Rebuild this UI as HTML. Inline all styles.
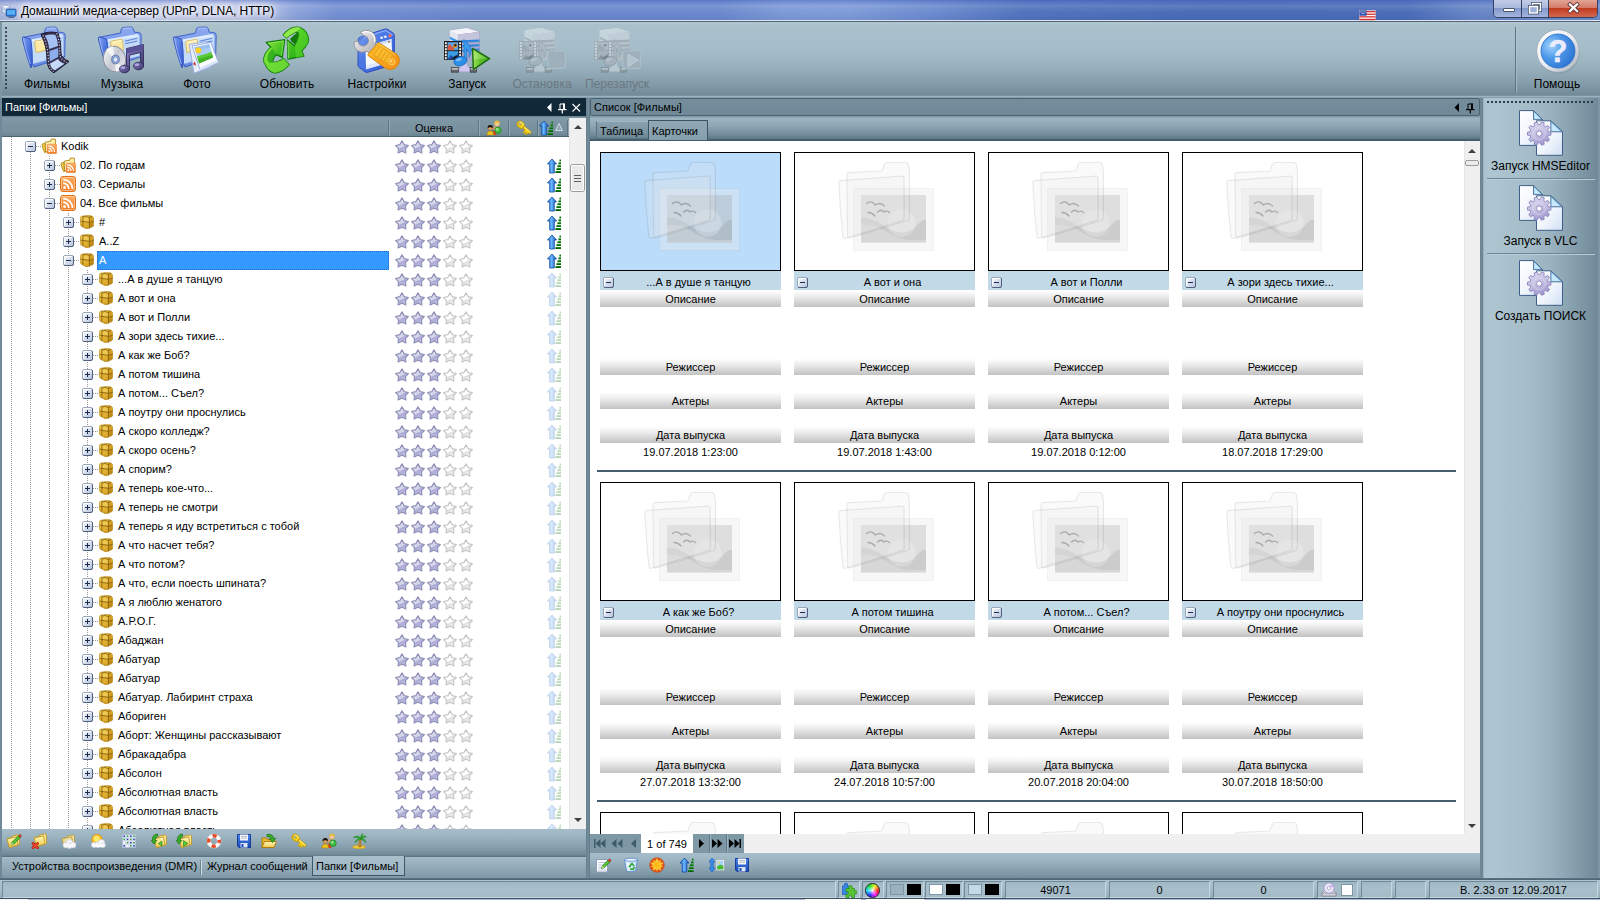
<!DOCTYPE html><html lang="ru"><head><meta charset="utf-8"><title>Домашний медиа-сервер (UPnP, DLNA, HTTP)</title><style>
*{box-sizing:border-box;margin:0;padding:0}
html,body{width:1600px;height:900px;overflow:hidden}
body{position:relative;background:#7b95a3;font:11px "Liberation Sans",sans-serif;color:#000}
div,svg.i{position:absolute}
.t{white-space:nowrap;line-height:14px;height:14px}
.c{text-align:center}
.l{font-size:12px;line-height:15px;height:15px}
.hd{background:linear-gradient(#fdfdfd,#ececec 35%,#d2d2d2 75%,#c2c2c2)}
.ti{background:#c2d9e8}
.ib{border:1px solid #000;background:#fff;overflow:hidden}
</style></head><body>
<svg width="0" height="0" style="position:absolute"><defs>
<linearGradient id="gFold" x1="0" y1="0" x2="1" y2="1"><stop offset="0" stop-color="#86a6f0"/><stop offset=".5" stop-color="#4f76e0"/><stop offset="1" stop-color="#3a5ccc"/></linearGradient>
<linearGradient id="gFoldB" x1="0" y1="0" x2="0" y2="1"><stop offset="0" stop-color="#8eaaf0"/><stop offset="1" stop-color="#6488e0"/></linearGradient>
<linearGradient id="gGreen" x1="0" y1="0" x2="1" y2="1"><stop offset="0" stop-color="#9be84a"/><stop offset=".5" stop-color="#3fc01e"/><stop offset="1" stop-color="#1e9a12"/></linearGradient>
<linearGradient id="gStar" gradientUnits="userSpaceOnUse" x1="4" y1="2" x2="10" y2="14"><stop offset="0" stop-color="#e4e4f2"/><stop offset=".5" stop-color="#d2d2e8"/><stop offset=".56" stop-color="#aaaad6"/><stop offset="1" stop-color="#c4c4e4"/></linearGradient>
<linearGradient id="gStarE" gradientUnits="userSpaceOnUse" x1="4" y1="2" x2="10" y2="14"><stop offset="0" stop-color="#ffffff"/><stop offset=".52" stop-color="#ffffff"/><stop offset=".58" stop-color="#dedede"/><stop offset="1" stop-color="#fbfbfb"/></linearGradient>
<linearGradient id="gBox" x1="0" y1="0" x2="1" y2="1"><stop offset="0" stop-color="#fbfcfe"/><stop offset="1" stop-color="#b4c2dc"/></linearGradient>
<linearGradient id="gArrow" x1="0" y1="0" x2="1" y2="0"><stop offset="0" stop-color="#1f78d8"/><stop offset=".45" stop-color="#6cb6ff"/><stop offset="1" stop-color="#0a4fb0"/></linearGradient>
<linearGradient id="gRss" x1="0" y1="0" x2="0" y2="1"><stop offset="0" stop-color="#fbb067"/><stop offset="1" stop-color="#f07820"/></linearGradient>
<linearGradient id="gGold" x1="0" y1="0" x2="1" y2="1"><stop offset="0" stop-color="#f6d860"/><stop offset=".5" stop-color="#dca526"/><stop offset="1" stop-color="#a9760f"/></linearGradient>
<linearGradient id="gYF" x1="0" y1="0" x2="0" y2="1"><stop offset="0" stop-color="#fff6b8"/><stop offset="1" stop-color="#f0cc50"/></linearGradient>
<radialGradient id="gHelp" cx=".3" cy=".35" r=".8"><stop offset="0" stop-color="#a4d4ff"/><stop offset=".45" stop-color="#4c98e8"/><stop offset="1" stop-color="#2a70d0"/></radialGradient>
<linearGradient id="gHelpR" x1="0" y1="0" x2="1" y2="1"><stop offset="0" stop-color="#ffffff"/><stop offset=".5" stop-color="#eceef2"/><stop offset="1" stop-color="#a4acb8"/></linearGradient>
<linearGradient id="gDoc" x1="0" y1="0" x2="1" y2="1"><stop offset="0" stop-color="#ffffff"/><stop offset=".55" stop-color="#f0f5fc"/><stop offset="1" stop-color="#cfdff4"/></linearGradient>
<linearGradient id="gGear" x1="0" y1="0" x2=".4" y2="1"><stop offset="0" stop-color="#dcd8f0"/><stop offset=".6" stop-color="#c4c0e2"/><stop offset="1" stop-color="#a49cd0"/></linearGradient>
<linearGradient id="gSrv" x1="0" y1="0" x2="1" y2="0"><stop offset="0" stop-color="#e8ecf4"/><stop offset=".5" stop-color="#c0c4d8"/><stop offset="1" stop-color="#8c8cb4"/></linearGradient>
<linearGradient id="gCd" x1="0" y1="0" x2="1" y2="1"><stop offset="0" stop-color="#ffffff"/><stop offset=".5" stop-color="#c4c8d0"/><stop offset="1" stop-color="#f0f0f4"/></linearGradient>
<linearGradient id="gNote" x1="0" y1="0" x2="1" y2="1"><stop offset="0" stop-color="#8c84c8"/><stop offset="1" stop-color="#3c3468"/></linearGradient>
<linearGradient id="gOr" x1="0" y1="0" x2="1" y2="1"><stop offset="0" stop-color="#fcc428"/><stop offset=".5" stop-color="#f8a420"/><stop offset="1" stop-color="#f09018"/></linearGradient>
<linearGradient id="gWin" x1="0" y1="0" x2="1" y2="1"><stop offset="0" stop-color="#7ea4f4"/><stop offset=".4" stop-color="#4c78e4"/><stop offset="1" stop-color="#345cd4"/></linearGradient>
<linearGradient id="gSilver" x1="0" y1="0" x2="1" y2="1"><stop offset="0" stop-color="#fafafa"/><stop offset="1" stop-color="#a4a4ac"/></linearGradient>
<linearGradient id="gPlay" x1="0" y1="0" x2="1" y2="0"><stop offset="0" stop-color="#a4e264"/><stop offset=".45" stop-color="#5cc028"/><stop offset="1" stop-color="#3ca418"/></linearGradient>
<linearGradient id="gFlop" x1="0" y1="0" x2="0" y2="1"><stop offset="0" stop-color="#4c84e8"/><stop offset="1" stop-color="#1848b8"/></linearGradient>
<symbol id="plus" viewBox="0 0 11 11"><rect x=".5" y=".5" width="10" height="10" rx="1.500" fill="url(#gBox)" stroke="#9aa6bc"/><path d="M1 10 Q1.500 10.500 2 10.500 L9 10.500 Q10.500 10.500 10.500 9 L10.500 2 Q10.500 1.500 10 1" fill="none" stroke="#50607e" stroke-width="1"/><path d="M1.500 9 L1.500 1.500 L9 1.500" fill="none" stroke="#fff" stroke-opacity=".9"/><path d="M3 5.500 h5 M5.500 3 v5" stroke="#1c2c4c" stroke-width="1"/></symbol><symbol id="minus" viewBox="0 0 11 11"><rect x=".5" y=".5" width="10" height="10" rx="1.500" fill="url(#gBox)" stroke="#9aa6bc"/><path d="M1 10 Q1.500 10.500 2 10.500 L9 10.500 Q10.500 10.500 10.500 9 L10.500 2 Q10.500 1.500 10 1" fill="none" stroke="#50607e" stroke-width="1"/><path d="M1.500 9 L1.500 1.500 L9 1.500" fill="none" stroke="#fff" stroke-opacity=".9"/><path d="M3 5.500 h5" stroke="#1c2c4c" stroke-width="1"/></symbol><symbol id="stars" viewBox="0 0 82 17"><path transform="translate(1,0)" d="M7.00 1.90 L9.17 5.61 L13.37 6.53 L10.52 9.74 L10.94 14.02 L7.00 12.30 L3.06 14.02 L3.48 9.74 L0.63 6.53 L4.83 5.61Z" fill="url(#gStar)" stroke="#8e8eb6" stroke-width="1.1" stroke-linejoin="round"/><path transform="translate(17,0)" d="M7.00 1.90 L9.17 5.61 L13.37 6.53 L10.52 9.74 L10.94 14.02 L7.00 12.30 L3.06 14.02 L3.48 9.74 L0.63 6.53 L4.83 5.61Z" fill="url(#gStar)" stroke="#8e8eb6" stroke-width="1.1" stroke-linejoin="round"/><path transform="translate(33,0)" d="M7.00 1.90 L9.17 5.61 L13.37 6.53 L10.52 9.74 L10.94 14.02 L7.00 12.30 L3.06 14.02 L3.48 9.74 L0.63 6.53 L4.83 5.61Z" fill="url(#gStar)" stroke="#8e8eb6" stroke-width="1.1" stroke-linejoin="round"/><path transform="translate(49,0)" d="M7.00 1.90 L9.17 5.61 L13.37 6.53 L10.52 9.74 L10.94 14.02 L7.00 12.30 L3.06 14.02 L3.48 9.74 L0.63 6.53 L4.83 5.61Z" fill="url(#gStarE)" stroke="#c4c4c8" stroke-width="1.1" stroke-linejoin="round"/><path transform="translate(65,0)" d="M7.00 1.90 L9.17 5.61 L13.37 6.53 L10.52 9.74 L10.94 14.02 L7.00 12.30 L3.06 14.02 L3.48 9.74 L0.63 6.53 L4.83 5.61Z" fill="url(#gStarE)" stroke="#c4c4c8" stroke-width="1.1" stroke-linejoin="round"/></symbol><symbol id="arrowbars" viewBox="0 0 15 16"><path d="M5 1 L9.500 6 L7.300 6 L7.300 15 L2.700 15 L2.700 6 L.5 6 Z" fill="url(#gArrow)" stroke="#0c4aa0" stroke-width=".8" stroke-linejoin="round"/><g fill="#128a12"><rect x="12.500" y="1.500" width="1.500" height="1.800"/><rect x="11.500" y="4.300" width="2.500" height="1.900"/><rect x="10.500" y="7.200" width="3.500" height="1.900"/><rect x="9.500" y="10.100" width="4.500" height="1.900"/><rect x="8.500" y="13" width="5.500" height="2"/></g><g fill="#0a4a0a"><rect x="12.500" y="2.700" width="1.500" height=".6"/><rect x="11.500" y="5.600" width="2.500" height=".6"/><rect x="10.500" y="8.500" width="3.500" height=".6"/><rect x="9.500" y="11.400" width="4.500" height=".6"/><rect x="8.500" y="14.300" width="5.500" height=".7"/></g></symbol><symbol id="rss" viewBox="0 0 16 16"><rect x=".5" y=".5" width="15" height="15" rx="2.500" fill="url(#gRss)" stroke="#e0701c"/><rect x="1.500" y="1.500" width="13" height="13" rx="1.800" fill="none" stroke="#ffd0a0" stroke-opacity=".7"/><circle cx="4.600" cy="11.500" r="1.500" fill="#fff"/><path d="M3.200 7.300 A5.600 5.600 0 0 1 8.800 12.900" fill="none" stroke="#fff" stroke-width="1.900"/><path d="M3.200 3.600 A9.300 9.300 0 0 1 12.500 12.900" fill="none" stroke="#fff" stroke-width="1.900"/></symbol><symbol id="rssfolder" viewBox="0 0 16 16"><path d="M4.200 14 L4.200 4.200 L10 3.100 L10.200 1.100 L14.300 1.100 L14.300 12 Z" fill="#fff8d4" stroke="#b48a18" stroke-width="1" stroke-linejoin="round"/><path d="M5 5 L10.500 4 L10.800 2 L13.500 2 L13.500 6 L5 7Z" fill="#fff29c" fill-opacity=".8"/><path d="M1 6.200 L3.800 5.300 L4.600 14.300 L3.500 14.500 Q1.500 10 1 6.200Z" fill="#f2d050" stroke="#b48a18" stroke-width=".9" stroke-linejoin="round"/><rect x="6" y="6" width="9.700" height="9.700" rx="1.200" fill="url(#gRss)" stroke="#e88c44" stroke-width=".5"/><circle cx="8.300" cy="13.300" r="1" fill="#fff"/><path d="M7.400 10.400 A3.700 3.700 0 0 1 11.100 14.100" fill="none" stroke="#fff" stroke-width="1.200"/><path d="M7.400 7.900 A6.200 6.200 0 0 1 13.600 14.100" fill="none" stroke="#fff" stroke-width="1.200"/></symbol><symbol id="cube" viewBox="0 0 14 14"><path d="M.5 2.600 Q.5 1.300 2 1.100 L8.500 .4 Q10 .3 11 .8 L13 1.900 Q13.600 2.300 13.600 3.400 L13.600 10.200 Q13.600 11.300 12.600 11.800 L8 13.600 Q6.800 14 5.700 13.500 L1.500 11.300 Q.5 10.800 .5 9.700 Z" fill="url(#gGold)" stroke="#b88a14" stroke-width=".6"/><path d="M3 2.700 L9.300 2.200 L9.300 13 L3 11.500Z" fill="#e8bc3c" fill-opacity=".55"/><path d="M3.300 3 L9 2.600 L9 6.800 L3.300 6.300Z" fill="#f4d468" fill-opacity=".6"/><path d="M2.900 1.500 L2.900 11.800 M9.400 2 L9.400 13.400" stroke="#7a5606" stroke-width=".9" stroke-opacity=".85" fill="none"/><path d="M.5 6 Q1.800 6.600 2.900 6.500 L9.400 7.300 Q11.500 7.200 13.600 6.200" stroke="#7a5606" stroke-width=".9" stroke-opacity=".85" fill="none"/><path d="M2.900 1.500 Q5 2.400 6 1 M6 1 Q7.500 2.500 9.400 2.100 Q11 2.200 12 1.300" stroke="#6a4a04" stroke-width=".8" stroke-opacity=".8" fill="none"/></symbol><symbol id="key" viewBox="0 0 16 16"><g transform="rotate(40 5 5)"><ellipse cx="4.600" cy="5" rx="4" ry="3.300" fill="#f6d21c" stroke="#c09808" stroke-width=".9"/><ellipse cx="3.600" cy="5" rx="1.500" ry="1.200" fill="#a8becb" stroke="#c09808" stroke-width=".6"/><path d="M8.400 3.700 L17 3.700 L17.800 5 L17 6.300 L15.500 6.300 L15.500 9 L14 9 L14 7.500 L13 7.500 L13 9.500 L11.300 9.500 L11.300 6.300 L8.400 6.300Z" fill="#f6d21c" stroke="#c09808" stroke-width=".8" stroke-linejoin="round"/><path d="M8.500 4.500 L16.800 4.500" stroke="#fff4a0" stroke-width=".8"/><path d="M2 3.600 Q4.500 1.800 7 3.200" stroke="#fff4a0" stroke-width=".8" fill="none"/></g></symbol><symbol id="users" viewBox="0 0 16 16"><circle cx="11" cy="3.800" r="2.700" fill="#f2cc98" stroke="#b8884c" stroke-width=".5"/><path d="M8.200 3.600 Q8.500 .6 11 .6 Q13.600 .6 13.800 3.600 Q11 2 8.200 3.600Z" fill="#e6bc38"/><circle cx="8.600" cy="8.200" r="1.700" fill="#e0a070"/><path d="M7 15 L7.300 10.500 Q8.500 9.600 10 10.500 L10.300 15Z" fill="#d43c1c"/><circle cx="12" cy="10.300" r="3.300" fill="#3cb83c" stroke="#1c7c1c" stroke-width=".6"/><circle cx="11.200" cy="9.300" r="1.500" fill="#a8eca8" fill-opacity=".75"/><circle cx="4.300" cy="8" r="2.500" fill="#d8a468" stroke="#5c3c14" stroke-width=".4"/><path d="M1.700 8 Q1.500 5 4.300 5 Q7 5 6.900 8 Q4.300 6.500 1.700 8Z" fill="#181008"/><path d="M.8 15 Q.8 11 4.300 11 Q7.600 11 7.600 15 Z" fill="#f2c41c" stroke="#a8800c" stroke-width=".6"/></symbol><symbol id="fedit" viewBox="0 0 16 16"><path d="M1.500 5.500 L6 4.500 L6.500 3 L12 1.800 L13.500 3 L13.500 11.500 L3.500 14.500 Z" fill="#f6e494" stroke="#c09828" stroke-width=".9" stroke-linejoin="round"/><path d="M1 6 L10.500 3.800 L12 11.800 L3.500 14.600 Z" fill="url(#gYF)" stroke="#c09828" stroke-width=".9" stroke-linejoin="round"/><path d="M5 12 L5.800 9.500 L12.500 2.800 L14.300 4.600 L7.600 11.300 Z" fill="#58c838" stroke="#1c7c14" stroke-width=".8" stroke-linejoin="round"/><path d="M12.500 2.800 L13.500 1.800 Q14.300 1.200 15 2 Q15.600 2.800 15 3.500 L14.300 4.600Z" fill="#e84838" stroke="#981808" stroke-width=".6"/><path d="M5 12 L5.800 9.500 L7.600 11.300Z" fill="#f8e0a8"/></symbol><symbol id="fdel" viewBox="0 0 16 16"><g transform="translate(2,-1)"><path d="M1.500 5.500 L6 4.500 L6.500 3 L12 1.800 L13.500 3 L13.500 11.500 L3.500 14.500 Z" fill="#f6e494" stroke="#c09828" stroke-width=".9" stroke-linejoin="round"/><path d="M1 6 L10.500 3.800 L12 11.800 L3.500 14.600 Z" fill="url(#gYF)" stroke="#c09828" stroke-width=".9" stroke-linejoin="round"/></g><path d="M2 10.500 L6.500 14.800 M6.500 10.500 L2 14.800" stroke="#a81808" stroke-width="2.800" stroke-linecap="round"/><path d="M2 10.500 L6.500 14.800 M6.500 10.500 L2 14.800" stroke="#f04830" stroke-width="1.600" stroke-linecap="round"/></symbol><symbol id="fcloud" viewBox="0 0 16 16"><g opacity=".85"><path d="M1.500 5.500 L6 4.500 L6.500 3 L12 1.800 L13.500 3 L13.500 11.500 L3.500 14.500 Z" fill="#f6e494" stroke="#c09828" stroke-width=".9" stroke-linejoin="round"/><path d="M1 6 L10.500 3.800 L12 11.800 L3.500 14.600 Z" fill="url(#gYF)" stroke="#c09828" stroke-width=".9" stroke-linejoin="round"/></g><g fill="#f8f8fc" stroke="#c4c8d4" stroke-width=".6"><circle cx="5" cy="12" r="3"/><circle cx="8.500" cy="10" r="3.400"/><circle cx="12" cy="12" r="3"/><circle cx="8.500" cy="13" r="2.600"/></g><rect x="4" y="11" width="9" height="3" fill="#f8f8fc"/></symbol><symbol id="sun" viewBox="0 0 16 16"><circle cx="7" cy="6.500" r="5" fill="#ffc818" stroke="#f09010" stroke-width="1"/><circle cx="6.500" cy="5.500" r="3" fill="#ffe870"/><g fill="#fafafe" stroke="#c8ccd8" stroke-width=".6"><circle cx="4" cy="11.800" r="2.600"/><circle cx="8" cy="11.500" r="3"/><circle cx="11.500" cy="9.800" r="3.200"/><circle cx="13" cy="12.200" r="2.400"/></g><rect x="3.500" y="11" width="10" height="3.200" fill="#fafafe"/></symbol><symbol id="grid" viewBox="0 0 16 16"><rect x="1.500" y="1.500" width="13" height="13" fill="#f4f6fc" stroke="#b0b8d8" stroke-width=".8"/><path d="M4.750 1.500 v13 M8 1.500 v13 M11.250 1.500 v13 M1.500 4.750 h13 M1.500 8 h13 M1.500 11.250 h13" stroke="#c4c8e4" stroke-width=".7"/><g fill="#2040b0"><rect x="2.400" y="2.400" width="1.600" height="1.600"/><rect x="9" y="2.400" width="1.600" height="1.600"/><rect x="5.700" y="5.600" width="1.600" height="1.600"/><rect x="12.200" y="5.600" width="1.600" height="1.600"/><rect x="9" y="8.900" width="1.600" height="1.600"/><rect x="2.400" y="12.100" width="1.600" height="1.600"/><rect x="12.200" y="12.100" width="1.600" height="1.600"/></g><g fill="#30a840"><rect x="5.700" y="2.400" width="1.600" height="1.600"/><rect x="12.200" y="2.400" width="1.600" height="1.600"/><rect x="2.400" y="5.600" width="1.600" height="1.600"/><rect x="9" y="5.600" width="1.600" height="1.600"/><rect x="5.700" y="8.900" width="1.600" height="1.600"/><rect x="12.200" y="8.900" width="1.600" height="1.600"/><rect x="9" y="12.100" width="1.600" height="1.600"/></g></symbol><symbol id="fback" viewBox="0 0 16 16"><g transform="translate(2,0)"><path d="M1.500 5.500 L6 4.500 L6.500 3 L12 1.800 L13.500 3 L13.500 11.500 L3.500 14.500 Z" fill="#f6e494" stroke="#c09828" stroke-width=".9" stroke-linejoin="round"/><path d="M1 6 L10.500 3.800 L12 11.800 L3.500 14.600 Z" fill="url(#gYF)" stroke="#c09828" stroke-width=".9" stroke-linejoin="round"/></g><path d="M6.500 1 Q1 1.500 1.500 7.500 L.3 7.500 L3 11 L5.800 7.500 L4.300 7.500 Q4 4 6.500 3.500Z" fill="#38b028" stroke="#146c0c" stroke-width=".7" stroke-linejoin="round"/><path d="M7.500 8 L7.500 13 L11 10.500Z" fill="#58c838" stroke="#1c7c14" stroke-width=".6" transform="rotate(180 9.200 10.500)"/></symbol><symbol id="ffwd" viewBox="0 0 16 16"><g transform="translate(2,0)"><path d="M1.500 5.500 L6 4.500 L6.500 3 L12 1.800 L13.500 3 L13.500 11.500 L3.500 14.500 Z" fill="#f6e494" stroke="#c09828" stroke-width=".9" stroke-linejoin="round"/><path d="M1 6 L10.500 3.800 L12 11.800 L3.500 14.600 Z" fill="url(#gYF)" stroke="#c09828" stroke-width=".9" stroke-linejoin="round"/></g><path d="M6.500 1 Q1 1.500 1.500 7.500 L.3 7.500 L3 11 L5.800 7.500 L4.300 7.500 Q4 4 6.500 3.500Z" fill="#38b028" stroke="#146c0c" stroke-width=".7" stroke-linejoin="round"/><path d="M7.500 7.500 L7.500 13.500 L12 10.500Z" fill="#58c838" stroke="#1c7c14" stroke-width=".6"/></symbol><symbol id="lifebuoy" viewBox="0 0 16 16"><circle cx="8" cy="8" r="5.200" fill="none" stroke="#c4c4c4" stroke-width="4.600"/><circle cx="8" cy="8" r="5.200" fill="none" stroke="#fafafa" stroke-width="3.600"/><circle cx="8" cy="8" r="5.200" fill="none" stroke="#e84c2c" stroke-width="3.600" stroke-dasharray="4.080 4.080" stroke-dashoffset="2"/></symbol><symbol id="floppy" viewBox="0 0 16 16"><path d="M1.500 1.500 h13 v13 h-11.500 l-1.500 -1.500 Z" fill="url(#gFlop)" stroke="#0c3494" stroke-width=".9" stroke-linejoin="round"/><rect x="4" y="1.500" width="8" height="6" fill="#f4f6fa"/><path d="M5 3.500 h6 M5 5.200 h6" stroke="#a8b0c0" stroke-width=".8"/><rect x="4.500" y="10" width="7" height="4.500" fill="#dfe6f4"/><rect x="5.500" y="11" width="2" height="3" fill="#1848b8"/></symbol><symbol id="fopen" viewBox="0 0 16 16"><path d="M1 5 h4.500 l1 1.500 h6.500 v8 h-12 z" fill="#e8b830" stroke="#a87808" stroke-width=".9" stroke-linejoin="round"/><path d="M1 14.500 L3.500 8.500 L15.500 8.500 L13 14.500 Z" fill="url(#gYF)" stroke="#a87808" stroke-width=".9" stroke-linejoin="round"/><path d="M6 1.500 Q12 .5 12.500 5.500 L14.800 5.300 L11.500 9.500 L8.500 5.800 L10.300 5.700 Q10 3.500 6 3.500Z" fill="#38b028" stroke="#146c0c" stroke-width=".7" stroke-linejoin="round"/></symbol><symbol id="palm" viewBox="0 0 16 16"><ellipse cx="8" cy="14" rx="6.500" ry="1.800" fill="#f0c838" stroke="#c89818" stroke-width=".6"/><path d="M8 14 Q7 9 9.500 5 L10.800 5.500 Q9 9 10 14Z" fill="#c89030" stroke="#8c5c14" stroke-width=".5"/><g fill="#38b838" stroke="#187c18" stroke-width=".5"><path d="M10 5 Q6 1.500 2.500 4.500 Q6.500 4 10 5.800Z"/><path d="M10 5 Q13 1 15.500 4 Q12.500 3.600 10.500 5.800Z"/><path d="M10 5 Q5.500 5 4 9.500 Q7 6.500 10.300 6.200Z"/><path d="M10 5 Q14.500 5.500 15 10 Q13 7 10 6.200Z"/><path d="M10 5 Q9.500 1.500 11.500 .5 Q11 3 10.800 5Z"/></g></symbol><symbol id="docedit" viewBox="0 0 16 16"><rect x="1.500" y="2.500" width="11" height="12.500" fill="#fafcff" stroke="#8c98b8" stroke-width=".9"/><path d="M3.500 5.500 h7 M3.500 8 h5 M3.500 10.500 h4" stroke="#b4bcd4" stroke-width=".9"/><rect x="3" y="11.500" width="8" height="2.500" fill="#dfe4f2"/><path d="M6.500 11.500 L7.300 9 L13 3.300 L14.800 5.100 L9.100 10.800 Z" fill="#58c838" stroke="#1c7c14" stroke-width=".8" stroke-linejoin="round"/><path d="M13 3.300 L14 2.300 Q14.800 1.700 15.500 2.500 Q16.100 3.300 15.500 4 L14.800 5.100Z" fill="#e84838" stroke="#981808" stroke-width=".6"/><path d="M6.500 11.500 L7.300 9 L9.100 10.800Z" fill="#f8e0a8"/></symbol><symbol id="recycle" viewBox="0 0 16 16"><path d="M1.500 2.500 Q8 4.500 14.500 2.500 L12.500 14 Q8 15.500 3.500 14 Z" fill="#cfe4fa" stroke="#5c8cd0" stroke-width=".9" stroke-linejoin="round"/><ellipse cx="8" cy="2.800" rx="6.500" ry="1.500" fill="#eaf4ff" stroke="#5c8cd0" stroke-width=".8"/><path d="M3 5 L4.500 13.500 Q6 14.300 7 14.300 L6 5.600Z" fill="#fff" fill-opacity=".6"/><g fill="none" stroke="#28a828" stroke-width="1.500"><path d="M7 9 L9 6.500 L11 9"/><path d="M11.500 10 L10 12.500 L7 12"/></g><path d="M6 8 L8 10 L5.500 10.500Z" fill="#28a828"/></symbol><symbol id="burst" viewBox="0 0 16 16"><circle cx="8" cy="8" r="7.300" fill="#e2581c" stroke="#c04010" stroke-width=".6"/><path d="M8.00 1.00 L9.88 5.41 L14.66 5.84 L11.04 8.99 L12.11 13.66 L8.00 11.20 L3.89 13.66 L4.96 8.99 L1.34 5.84 L6.12 5.41Z" fill="#ffd23c" transform="rotate(0 8 8)"/><path d="M8.00 1.60 L9.76 5.57 L14.09 6.02 L10.85 8.93 L11.76 13.18 L8.00 11.00 L4.24 13.18 L5.15 8.93 L1.91 6.02 L6.24 5.57Z" fill="#ffc428" transform="rotate(36 8 8)"/><circle cx="8" cy="8" r="2.600" fill="#ffbc18"/></symbol><symbol id="updownpic" viewBox="0 0 16 16"><path d="M3 1 L6 5 L4.200 5 L4.200 11 L6 11 L3 15 L0 11 L1.800 11 L1.800 5 L0 5 Z" fill="#3c90f0" stroke="#1458b8" stroke-width=".6" stroke-linejoin="round"/><rect x="7" y="2.500" width="8.500" height="11" fill="#fafafa" stroke="#a0a8b8" stroke-width=".8"/><rect x="8" y="3.500" width="6.500" height="5" fill="#a8d4f8"/><path d="M8 12.500 L8 9.500 Q11 6.500 14.500 9 L14.500 12.500Z" fill="#48b838"/><circle cx="10" cy="5.500" r="1" fill="#f8e040"/></symbol><symbol id="puzzle" viewBox="0 0 16 16"><path d="M1.500 4 L3.500 4 Q2.800 1 5 1 Q7.200 1 6.500 4 L8.500 4 L8.500 12.500 L1.500 12.500Z" fill="#3a84e4" stroke="#1c58b4" stroke-width=".7" stroke-linejoin="round"/><path d="M5 6.500 L8 6.500 Q7 3.500 9.500 3.500 Q12 3.500 11 6.500 L13.500 6.500 L13.500 9 Q16 8 16 10.300 Q16 12.600 13.500 11.600 L13.500 15.500 L10.500 15.500 Q11.300 13 9.300 13 Q7.300 13 8 15.500 L5 15.500 L5 12 Q7.500 12.800 7.500 10.800 Q7.500 8.800 5 9.600Z" fill="#58c434" stroke="#2c8c14" stroke-width=".7" stroke-linejoin="round"/></symbol><symbol id="wheel" viewBox="0 0 16 16"><circle cx="8" cy="8" r="7.500" fill="#101010"/><g transform="translate(8,8)"><path d="M0 0 L6.500 0 A6.500 6.500 0 0 1 3.250 5.629 Z" fill="#f03030" transform="rotate(0)"/><path d="M0 0 L6.500 0 A6.500 6.500 0 0 1 3.250 5.629 Z" fill="#f0e020" transform="rotate(60)"/><path d="M0 0 L6.500 0 A6.500 6.500 0 0 1 3.250 5.629 Z" fill="#30d030" transform="rotate(120)"/><path d="M0 0 L6.500 0 A6.500 6.500 0 0 1 3.250 5.629 Z" fill="#20d0e0" transform="rotate(180)"/><path d="M0 0 L6.500 0 A6.500 6.500 0 0 1 3.250 5.629 Z" fill="#3040f0" transform="rotate(240)"/><path d="M0 0 L6.500 0 A6.500 6.500 0 0 1 3.250 5.629 Z" fill="#e030e0" transform="rotate(300)"/><circle r="1.800" fill="#fff"/></g></symbol><symbol id="cdrom" viewBox="0 0 16 16"><path d="M1 11 L3.500 8.500 L12.500 8.500 L15 11 L15 14 L1 14Z" fill="#e4e4ea" stroke="#8c8c98" stroke-width=".8"/><rect x="1" y="11" width="14" height="3" fill="#cfd0d8" stroke="#8c8c98" stroke-width=".8"/><circle cx="8" cy="6" r="5.200" fill="#e8e4f8" stroke="#9890c0" stroke-width=".8"/><circle cx="8" cy="6" r="1.700" fill="#fff" stroke="#9890c0" stroke-width=".6"/><path d="M8 6 L11 1.800 A5.200 5.200 0 0 1 13 4.500Z" fill="#c8a8e8" fill-opacity=".8"/></symbol><symbol id="ic_films" viewBox="0 0 48 48"><path d="M.5 11.500 L22.500 7 L23.200 3.500 Q23.700 1.600 25.500 1.400 L32.800 1 Q34.500 1 35.200 2.800 L36.300 6.200 L40.800 6.500 Q43 6.800 43.200 9.500 L42.600 31 L12 41 Z" fill="url(#gFoldB)" stroke="#3f62c8" stroke-width="1"/><path d="M24.500 3.200 Q25 2.400 26 2.300 L32.500 2 Q33.800 2 34.200 3.200" fill="none" stroke="#b8ccf8" stroke-width=".9"/><path d="M9 13.500 L39.500 8 Q41.600 8 41.700 10 L41.800 30 L10.500 38 Z" fill="#c4dcfa" stroke="#86a6e8" stroke-width=".7"/><path d="M9 13.500 L39.500 8 L39.700 10.500 L9.300 16Z" fill="#deecfe"/><path d="M26.800 15.300 L39.300 12.300 M27.200 17.800 L39.400 15" stroke="#5c80d8" stroke-width="1.100"/><path d="M12.700 16.500 Q12.500 15.200 14 15 L23 13.300 Q24.300 13.200 24.500 14.400 L25.500 24 L14 26.500 Z" fill="#fbe9a4" stroke="#dcb44c" stroke-width=".8"/><path d="M14.500 16.300 L23.500 14.600" stroke="#fffbe0" stroke-width="1"/><path d="M.2 12.300 Q.1 11.200 1.300 10.900 L8.800 13.300 Q10.500 25 10.300 36 Q10.300 40 9 41.800 Q5 32 .2 12.300Z" fill="url(#gFold)" stroke="#3354c4" stroke-width="1" stroke-linejoin="round"/><path d="M1.300 12.300 Q4 25 8.300 38" fill="none" stroke="#a9c0f6" stroke-width="1" stroke-opacity=".8"/><path d="M19 8.500 Q27 4.500 36 7 Q39.500 17 39 27 Q39 32 47 35.500 L32 46.800 Q25.500 44 25 34 Q25 20 19 8.500Z" fill="#36304e" stroke="#1e1a32" stroke-width="1" stroke-linejoin="round"/><path d="M22.800 9.800 Q27.500 7.600 33.300 8.800 Q35.800 14 36.100 20 L27.200 23 Q26.500 15.500 22.800 9.800Z" fill="#a6c2f4"/><path d="M27.500 25 L36.200 22 Q36.600 26.500 36.100 31 L27.800 35.500 Q27.400 30 27.500 25Z" fill="#8cadec"/><path d="M28 37.500 L36.100 33 Q37.500 36 42.500 37.800 L33 44.300 Q28.800 42.500 28 37.500Z" fill="#c4d8fa"/><path d="M20.900 9.300 Q26 21 26.300 34 Q26.500 42 31.500 45.600" fill="none" stroke="#d4d4e4" stroke-width="1.100" stroke-dasharray="1.200 1.700"/><path d="M34.700 7.300 Q38.300 17 37.700 27 Q37.600 33 45.200 36.600" fill="none" stroke="#d4d4e4" stroke-width="1.100" stroke-dasharray="1.200 1.700"/></symbol><symbol id="ic_music" viewBox="0 0 48 48"><path d="M.5 11.500 L22.500 7 L23.200 3.500 Q23.700 1.600 25.500 1.400 L32.800 1 Q34.500 1 35.200 2.800 L36.300 6.200 L40.800 6.500 Q43 6.800 43.200 9.500 L42.600 31 L12 41 Z" fill="url(#gFoldB)" stroke="#3f62c8" stroke-width="1"/><path d="M24.500 3.200 Q25 2.400 26 2.300 L32.500 2 Q33.800 2 34.200 3.200" fill="none" stroke="#b8ccf8" stroke-width=".9"/><path d="M9 13.500 L39.500 8 Q41.600 8 41.700 10 L41.800 30 L10.500 38 Z" fill="#c4dcfa" stroke="#86a6e8" stroke-width=".7"/><path d="M9 13.500 L39.500 8 L39.700 10.500 L9.300 16Z" fill="#deecfe"/><path d="M26.800 15.300 L39.300 12.300 M27.200 17.800 L39.400 15" stroke="#5c80d8" stroke-width="1.100"/><path d="M12.700 16.500 Q12.500 15.200 14 15 L23 13.300 Q24.300 13.200 24.500 14.400 L25.500 24 L14 26.500 Z" fill="#fbe9a4" stroke="#dcb44c" stroke-width=".8"/><path d="M14.500 16.300 L23.500 14.600" stroke="#fffbe0" stroke-width="1"/><path d="M.2 12.300 Q.1 11.200 1.300 10.900 L8.800 13.300 Q10.500 25 10.300 36 Q10.300 40 9 41.800 Q5 32 .2 12.300Z" fill="url(#gFold)" stroke="#3354c4" stroke-width="1" stroke-linejoin="round"/><path d="M1.300 12.300 Q4 25 8.300 38" fill="none" stroke="#a9c0f6" stroke-width="1" stroke-opacity=".8"/><ellipse cx="16.500" cy="33" rx="11" ry="12.800" fill="url(#gCd)" stroke="#8c909c" stroke-width="1" transform="rotate(-12 16.500 33)"/><path d="M16.500 33 L8 24 Q11 20.500 15 20.300Z M16.500 33 L25 42 Q22 45.500 18 45.700Z" fill="#fff" fill-opacity=".7"/><ellipse cx="17.500" cy="33.500" rx="3.800" ry="4.400" fill="#8aa4d8" stroke="#5c6c98" stroke-width=".8"/><ellipse cx="17.500" cy="33.500" rx="1.600" ry="1.900" fill="#e4ecfc"/><path d="M28.500 22.500 L45.500 18.500 L45.500 40 L42.500 40 L42.500 26.500 L31.500 29.200 L31.500 43.500 L28.500 43.500 Z" fill="url(#gNote)" stroke="#2a2450" stroke-width=".8"/><path d="M28.500 22.500 L45.500 18.500 L45.500 23.500 L28.500 27.500Z" fill="#5a5298"/><ellipse cx="26.500" cy="43" rx="5" ry="3.800" fill="url(#gNote)" stroke="#2a2450" stroke-width=".8"/><ellipse cx="40.500" cy="40" rx="5" ry="3.800" fill="url(#gNote)" stroke="#2a2450" stroke-width=".8"/><ellipse cx="25" cy="41.800" rx="2.200" ry="1.300" fill="#c4bcf0" fill-opacity=".8"/><ellipse cx="39" cy="38.800" rx="2.200" ry="1.300" fill="#c4bcf0" fill-opacity=".8"/></symbol><symbol id="ic_photo" viewBox="0 0 48 48"><path d="M.5 11.500 L22.500 7 L23.200 3.500 Q23.700 1.600 25.500 1.400 L32.800 1 Q34.500 1 35.200 2.800 L36.300 6.200 L40.800 6.500 Q43 6.800 43.200 9.500 L42.600 31 L12 41 Z" fill="url(#gFoldB)" stroke="#3f62c8" stroke-width="1"/><path d="M24.500 3.200 Q25 2.400 26 2.300 L32.500 2 Q33.800 2 34.200 3.200" fill="none" stroke="#b8ccf8" stroke-width=".9"/><path d="M9 13.500 L39.500 8 Q41.600 8 41.700 10 L41.800 30 L10.500 38 Z" fill="#c4dcfa" stroke="#86a6e8" stroke-width=".7"/><path d="M9 13.500 L39.500 8 L39.700 10.500 L9.300 16Z" fill="#deecfe"/><path d="M26.800 15.300 L39.300 12.300 M27.200 17.800 L39.400 15" stroke="#5c80d8" stroke-width="1.100"/><path d="M12.700 16.500 Q12.500 15.200 14 15 L23 13.300 Q24.300 13.200 24.500 14.400 L25.500 24 L14 26.500 Z" fill="#fbe9a4" stroke="#dcb44c" stroke-width=".8"/><path d="M14.500 16.300 L23.500 14.600" stroke="#fffbe0" stroke-width="1"/><path d="M.2 12.300 Q.1 11.200 1.300 10.900 L8.800 13.300 Q10.500 25 10.300 36 Q10.300 40 9 41.800 Q5 32 .2 12.300Z" fill="url(#gFold)" stroke="#3354c4" stroke-width="1" stroke-linejoin="round"/><path d="M1.300 12.300 Q4 25 8.300 38" fill="none" stroke="#a9c0f6" stroke-width="1" stroke-opacity=".8"/><path d="M16.300 18.500 L34 15.500 L38 41 L21 47.200 Z" fill="#e8effc" stroke="#93a8dc" stroke-width=".9" stroke-linejoin="round"/><path d="M20 38 L22 35.500 L23 40Z" fill="#c03030"/><path d="M19 20 L37.900 16.400 L45.400 36.200 L27.400 44.600 Z" fill="#fafcff" stroke="#8ea4dc" stroke-width=".9" stroke-linejoin="round"/><path d="M27.400 44.600 L45.400 36.200 L44.600 34 L26.600 42Z" fill="#d8e4fa"/><path d="M21.100 21.200 L36.400 18.200 L40 31.400 L26.200 37.400 Z" fill="#a9cdf6"/><path d="M21.100 21.200 L36.400 18.200 L37.300 21.500 L22.100 24.700Z" fill="#8fb6ee" fill-opacity=".6"/><path d="M23.800 30.500 Q29 28.500 33 28 Q36.500 26 38.600 26.300 L40 31.400 L26.200 37.400Z" fill="#5ccc34"/><path d="M24.800 33.300 L39.400 29 L40 31.400 L26.200 37.400Z" fill="#3aa81c" fill-opacity=".75"/><circle cx="25.300" cy="24.300" r="2.800" fill="#ffd21c" stroke="#f4b420" stroke-width=".5"/></symbol><symbol id="ic_refresh" viewBox="0 0 48 48"><path d="M3.100 16.400 L21.700 13.700 L19.300 31.400 L13 28.700 Q9 33 10 36.200 Q14 37 20.800 32.600 L26.200 38.600 Q20 46 11.800 47 Q5 45 2.800 39.200 Q0 36 1 32 Q2 26 7.900 21.200 Z" fill="url(#gGreen)" stroke="#0f7a0a" stroke-width="1.300" stroke-linejoin="round"/><path d="M2.800 39.200 Q0 36 1 32 Q2 26 7.900 21.200 L9.500 22.500 Q4 28 4.500 33 Q5 38 10 36.200 Q14 37 20.800 32.600 L26.200 38.600 Q20 46 11.800 47 Q5 45 2.800 39.200Z" fill="#7ee63c" fill-opacity=".75"/><path d="M4.500 33 Q5 38 10 36.200 Q9 33 13 28.700 L9.500 22.500 Q4 28 4.500 33Z" fill="#2aa818" fill-opacity=".7"/><path d="M5 17.300 L20.500 15 L18.500 29.500" fill="none" stroke="#9af060" stroke-width="1" stroke-opacity=".7"/><path d="M20.200 8.900 Q25 3 31 1.400 Q35 .5 38 2 Q44 5 45.400 12.200 Q46 17 43 20 L38.800 24.800 L40.900 30.200 L25 33.200 L24.400 14 L31.600 20 Q35.500 13 35.800 8 Q34.500 5.500 32 6.500 Q27 9 23.200 11.900 Z" fill="url(#gGreen)" stroke="#0f7a0a" stroke-width="1.300" stroke-linejoin="round"/><path d="M20.200 8.900 Q25 3 31 1.400 Q35 .5 38 2 Q36 3.500 32 6.500 Q27 9 23.200 11.900Z" fill="#9af050" fill-opacity=".8"/><path d="M27 13 Q31 8.500 34.500 6.800 Q36 8 35.800 10.500 Q34.500 15 32 18.500 L28.500 15.500Z" fill="#157a0c"/><path d="M38 2 Q44 5 45.400 12.200 Q46 17 43 20 L38.800 24.800 L40.900 30.200 L33 31.700 L31.600 20 Q35.500 13 35.800 8 Q36 4 38 2Z" fill="#5cd82c" fill-opacity=".6"/><path d="M24.900 15 L25.500 32.500" stroke="#a8f470" stroke-width="1" stroke-opacity=".7"/></symbol><symbol id="ic_settings" viewBox="0 0 48 48"><path d="M5.200 13.500 Q5.200 11.800 7 11.200 L32 3 Q33.500 2.600 34.800 3.500 L40.300 7.300 Q41.300 8 41.300 9.500 L41.300 37 Q41.300 38.500 39.800 39 L14.500 46.300 Q13 46.700 12 45.800 L6 41.300 Q5 40.500 5 39 Z" fill="url(#gWin)" stroke="#2a4cc0" stroke-width="1" stroke-linejoin="round"/><path d="M6.500 13 L32.500 4.500 L39.800 9" fill="none" stroke="#9cb8fa" stroke-width="1.200" stroke-opacity=".8"/><path d="M12.500 20.500 L38.500 13 L39.500 35.500 L13 43.200 Z" fill="#f4f8ff"/><path d="M12.500 20.500 L38.500 13 L38.600 15.500 L12.600 23Z" fill="#cfdcf8"/><path d="M13 43.200 L39.500 35.500 L39.400 32 L13 39.500Z" fill="#dfe8fc"/><ellipse cx="28.600" cy="11.700" rx="1.500" ry="1.200" fill="#dce8ff"/><ellipse cx="32.300" cy="10.800" rx="1.500" ry="1.200" fill="#dce8ff"/><ellipse cx="37" cy="9.800" rx="1.700" ry="1.500" fill="#f07060"/><circle cx="36" cy="15.800" r=".9" fill="#8c5c28"/><path d="M7.600 6.200 Q14 2.500 19.500 6.500 Q24.500 11 22.500 18 L24.500 24 L18.500 28.500 L14 25.500 Q8 27.500 4 24.500 Q0 21 1 15.800 L5 14.800 Q5.500 19.500 10 20 Q15 19.500 15.500 14.500 Q15 10 10.500 9.500 Z" fill="url(#gSilver)" stroke="#8c8c94" stroke-width=".9" stroke-linejoin="round"/><path d="M10.500 9.500 Q6 10.500 5 14.800 L7.500 15.500 Q8.500 12.500 11 12Z" fill="#5c84e0"/><path d="M9 6.500 Q14.500 4.200 19 7.500 Q22.500 11 21.500 16" fill="none" stroke="#fff" stroke-width="1.300" stroke-opacity=".9"/><path d="M25.500 16.500 L44 28.500 Q47.500 32 46 37 Q43.500 43 37.500 43.500 Q34 43.500 31.500 41.500 L15.500 30 Q14.500 28.500 15.500 27.500 Z" fill="url(#gOr)" stroke="#d88408" stroke-width="1" stroke-linejoin="round"/><path d="M27 20.500 L39.500 28.500 L34 37.500 L21 29Z" fill="#fcd03c" fill-opacity=".55" stroke="#e09810" stroke-width=".7"/><path d="M29.500 23.500 L25 30.800 M32.800 25.500 L28.300 33 M36 27.500 L31.500 35" stroke="#e8a018" stroke-width="1.300"/><path d="M26.300 18.300 L42 28.500" stroke="#ffe070" stroke-width="1" stroke-opacity=".8"/><circle cx="38.800" cy="35.800" r="3.200" fill="#f8a828" stroke="#ffcc58" stroke-width="1"/><circle cx="38.300" cy="35.300" r="1" fill="#ffe8a0"/></symbol><symbol id="ic_start" viewBox="0 0 48 48"><path d="M6.700 4.400 L23.800 2 L36.400 5.900 L36.400 33 L14.800 36 L6.700 32Z" fill="url(#gSrv)" stroke="#9c9cc0" stroke-width=".7"/><path d="M6.700 4.400 L23.800 2 L36.400 5.900 L14.800 8.600Z" fill="#f4f4fa"/><path d="M14.800 8.600 L36.400 5.900 L36.400 33 L14.800 36Z" fill="#a8a8cc"/><path d="M14.800 8.600 L36.400 5.900 L36.400 14 L14.800 17Z" fill="#c4c4dc"/><path d="M6.700 4.400 L14.800 8.600 L14.800 36 L6.700 32Z" fill="#e4e6f0"/><path d="M14.800 14.500 L36.400 13.400 L36.400 15.800 L14.800 17Z M14.800 19.300 L36.400 18.200 L36.400 20.300 L14.800 21.600Z M14.800 24 L36.400 22.600 L36.400 24.600 L14.800 26.300Z" fill="#2f86dc"/><path d="M6.700 10.500 L14.800 14.500 L14.800 17 L6.700 13Z M6.700 15 L14.800 19.300 L14.800 21.600 L6.700 17.300Z" fill="#3f96ec"/><path d="M19.500 34 L18.500 40 Q15.500 41.500 15.400 45.800 L27.400 45.800 Q27.300 41.500 24.500 40 L23.500 34Z" fill="#cfc8ec" stroke="#a49cd0" stroke-width=".6"/><rect x="8.200" y="41.600" width="7.400" height="4.600" fill="#606468" stroke="#303438" stroke-width=".6"/><rect x="27.200" y="41.600" width="6.400" height="4.600" fill="#606468" stroke="#303438" stroke-width=".6"/><rect x="8.700" y="42.100" width="6.400" height="1.600" fill="#c8c8cc"/><rect x="27.700" y="42.100" width="5.400" height="1.600" fill="#c8c8cc"/><rect x="1" y="15" width="18" height="19" fill="#1c1c20"/><rect x="4.600" y="16.200" width="10.600" height="8" fill="#58a4e8"/><rect x="4.600" y="25.200" width="10.600" height="8" fill="#3c9ce4"/><path d="M4.600 24.200 L4.600 20 L7 18 L9 21 L11 19.500 L11 24.200Z" fill="#d85848"/><circle cx="12.200" cy="19.800" r="2.200" fill="#e89830"/><circle cx="12.200" cy="19.300" r="1.300" fill="#38281c"/><path d="M4.600 33.200 L8 29 L11 31.500 L15.200 27.500 L15.200 33.200Z" fill="#1c4c9c"/><path d="M9 33.200 Q12 28 15.200 30 L15.200 33.200Z" fill="#181c28"/><g fill="#f4f4f0"><rect x="1.900" y="16.200" width="1.900" height="2"/><rect x="1.900" y="19.200" width="1.900" height="2"/><rect x="1.900" y="22.200" width="1.900" height="2"/><rect x="1.900" y="25.200" width="1.900" height="2"/><rect x="1.900" y="28.200" width="1.900" height="2"/><rect x="1.900" y="31.200" width="1.900" height="2"/><rect x="16.200" y="16.200" width="1.900" height="2"/><rect x="16.200" y="19.200" width="1.900" height="2"/><rect x="16.200" y="22.200" width="1.900" height="2"/><rect x="16.200" y="25.200" width="1.900" height="2"/><rect x="16.200" y="28.200" width="1.900" height="2"/><rect x="16.200" y="31.200" width="1.900" height="2"/></g><path d="M20.800 13.500 Q22.500 14.500 23 16 Q28 19 28.200 24 Q28.400 28.500 26 31.500 Q27 26 23.600 22.500 L23.800 34 L21.300 34.500 Z" fill="#3c9cec" stroke="#1c6cc4" stroke-width=".6" stroke-linejoin="round"/><ellipse cx="17.400" cy="35.200" rx="6.600" ry="4.500" fill="#2c90e8" stroke="#1464bc" stroke-width=".7" transform="rotate(-14 17.400 35.200)"/><ellipse cx="15.800" cy="33.600" rx="3.200" ry="1.500" fill="#8cccff" fill-opacity=".75" transform="rotate(-14 15.800 33.600)"/><path d="M29.500 22.400 L46.600 32.600 L30.400 43.400 Z" fill="url(#gPlay)" stroke="#1c6c10" stroke-width="1.400" stroke-linejoin="round"/><path d="M30.800 24.800 L43.500 32.300 L30.900 33.500Z" fill="#d0f8a0" fill-opacity=".35"/></symbol><symbol id="ic_stop" viewBox="0 0 48 48"><g opacity=".34" style="filter:grayscale(1) brightness(1.2)"><path d="M6.700 4.400 L23.800 2 L36.400 5.900 L36.400 33 L14.800 36 L6.700 32Z" fill="url(#gSrv)" stroke="#9c9cc0" stroke-width=".7"/><path d="M6.700 4.400 L23.800 2 L36.400 5.900 L14.800 8.600Z" fill="#f4f4fa"/><path d="M14.800 8.600 L36.400 5.900 L36.400 33 L14.800 36Z" fill="#a8a8cc"/><path d="M14.800 8.600 L36.400 5.900 L36.400 14 L14.800 17Z" fill="#c4c4dc"/><path d="M6.700 4.400 L14.800 8.600 L14.800 36 L6.700 32Z" fill="#e4e6f0"/><path d="M14.800 14.500 L36.400 13.400 L36.400 15.800 L14.800 17Z M14.800 19.300 L36.400 18.200 L36.400 20.300 L14.800 21.600Z M14.800 24 L36.400 22.600 L36.400 24.600 L14.800 26.300Z" fill="#2f86dc"/><path d="M6.700 10.500 L14.800 14.500 L14.800 17 L6.700 13Z M6.700 15 L14.800 19.300 L14.800 21.600 L6.700 17.300Z" fill="#3f96ec"/><path d="M19.500 34 L18.500 40 Q15.500 41.500 15.400 45.800 L27.400 45.800 Q27.300 41.500 24.500 40 L23.500 34Z" fill="#cfc8ec" stroke="#a49cd0" stroke-width=".6"/><rect x="8.200" y="41.600" width="7.400" height="4.600" fill="#606468" stroke="#303438" stroke-width=".6"/><rect x="27.200" y="41.600" width="6.400" height="4.600" fill="#606468" stroke="#303438" stroke-width=".6"/><rect x="8.700" y="42.100" width="6.400" height="1.600" fill="#c8c8cc"/><rect x="27.700" y="42.100" width="5.400" height="1.600" fill="#c8c8cc"/><rect x="1" y="15" width="18" height="19" fill="#66727c"/><rect x="4.600" y="16.200" width="10.600" height="8" fill="#58a4e8"/><rect x="4.600" y="25.200" width="10.600" height="8" fill="#3c9ce4"/><path d="M4.600 24.200 L4.600 20 L7 18 L9 21 L11 19.500 L11 24.200Z" fill="#d85848"/><circle cx="12.200" cy="19.800" r="2.200" fill="#e89830"/><circle cx="12.200" cy="19.300" r="1.300" fill="#38281c"/><path d="M4.600 33.200 L8 29 L11 31.500 L15.200 27.500 L15.200 33.200Z" fill="#1c4c9c"/><path d="M9 33.200 Q12 28 15.200 30 L15.200 33.200Z" fill="#181c28"/><g fill="#f4f4f0"><rect x="1.900" y="16.200" width="1.900" height="2"/><rect x="1.900" y="19.200" width="1.900" height="2"/><rect x="1.900" y="22.200" width="1.900" height="2"/><rect x="1.900" y="25.200" width="1.900" height="2"/><rect x="1.900" y="28.200" width="1.900" height="2"/><rect x="1.900" y="31.200" width="1.900" height="2"/><rect x="16.200" y="16.200" width="1.900" height="2"/><rect x="16.200" y="19.200" width="1.900" height="2"/><rect x="16.200" y="22.200" width="1.900" height="2"/><rect x="16.200" y="25.200" width="1.900" height="2"/><rect x="16.200" y="28.200" width="1.900" height="2"/><rect x="16.200" y="31.200" width="1.900" height="2"/></g><path d="M20.800 13.500 Q22.500 14.500 23 16 Q28 19 28.200 24 Q28.400 28.500 26 31.500 Q27 26 23.600 22.500 L23.800 34 L21.300 34.500 Z" fill="#8098a8" stroke="#1c6cc4" stroke-width=".6" stroke-linejoin="round"/><ellipse cx="17.400" cy="35.200" rx="6.600" ry="4.500" fill="#8098a8" stroke="#1464bc" stroke-width=".7" transform="rotate(-14 17.400 35.200)"/><ellipse cx="15.800" cy="33.600" rx="3.200" ry="1.500" fill="#8cccff" fill-opacity=".75" transform="rotate(-14 15.800 33.600)"/></g><rect x="29.800" y="24.800" width="17.500" height="17.500" rx="2" fill="#9db0bb" stroke="#afc1cb" stroke-width="1"/></symbol><symbol id="ic_restart" viewBox="0 0 48 48"><g opacity=".34" style="filter:grayscale(1) brightness(1.2)"><path d="M6.700 4.400 L23.800 2 L36.400 5.900 L36.400 33 L14.800 36 L6.700 32Z" fill="url(#gSrv)" stroke="#9c9cc0" stroke-width=".7"/><path d="M6.700 4.400 L23.800 2 L36.400 5.900 L14.800 8.600Z" fill="#f4f4fa"/><path d="M14.800 8.600 L36.400 5.900 L36.400 33 L14.800 36Z" fill="#a8a8cc"/><path d="M14.800 8.600 L36.400 5.900 L36.400 14 L14.800 17Z" fill="#c4c4dc"/><path d="M6.700 4.400 L14.800 8.600 L14.800 36 L6.700 32Z" fill="#e4e6f0"/><path d="M14.800 14.500 L36.400 13.400 L36.400 15.800 L14.800 17Z M14.800 19.300 L36.400 18.200 L36.400 20.300 L14.800 21.600Z M14.800 24 L36.400 22.600 L36.400 24.600 L14.800 26.300Z" fill="#2f86dc"/><path d="M6.700 10.500 L14.800 14.500 L14.800 17 L6.700 13Z M6.700 15 L14.800 19.300 L14.800 21.600 L6.700 17.300Z" fill="#3f96ec"/><path d="M19.500 34 L18.500 40 Q15.500 41.500 15.400 45.800 L27.400 45.800 Q27.300 41.500 24.500 40 L23.500 34Z" fill="#cfc8ec" stroke="#a49cd0" stroke-width=".6"/><rect x="8.200" y="41.600" width="7.400" height="4.600" fill="#606468" stroke="#303438" stroke-width=".6"/><rect x="27.200" y="41.600" width="6.400" height="4.600" fill="#606468" stroke="#303438" stroke-width=".6"/><rect x="8.700" y="42.100" width="6.400" height="1.600" fill="#c8c8cc"/><rect x="27.700" y="42.100" width="5.400" height="1.600" fill="#c8c8cc"/><rect x="1" y="15" width="18" height="19" fill="#66727c"/><rect x="4.600" y="16.200" width="10.600" height="8" fill="#58a4e8"/><rect x="4.600" y="25.200" width="10.600" height="8" fill="#3c9ce4"/><path d="M4.600 24.200 L4.600 20 L7 18 L9 21 L11 19.500 L11 24.200Z" fill="#d85848"/><circle cx="12.200" cy="19.800" r="2.200" fill="#e89830"/><circle cx="12.200" cy="19.300" r="1.300" fill="#38281c"/><path d="M4.600 33.200 L8 29 L11 31.500 L15.200 27.500 L15.200 33.200Z" fill="#1c4c9c"/><path d="M9 33.200 Q12 28 15.200 30 L15.200 33.200Z" fill="#181c28"/><g fill="#f4f4f0"><rect x="1.900" y="16.200" width="1.900" height="2"/><rect x="1.900" y="19.200" width="1.900" height="2"/><rect x="1.900" y="22.200" width="1.900" height="2"/><rect x="1.900" y="25.200" width="1.900" height="2"/><rect x="1.900" y="28.200" width="1.900" height="2"/><rect x="1.900" y="31.200" width="1.900" height="2"/><rect x="16.200" y="16.200" width="1.900" height="2"/><rect x="16.200" y="19.200" width="1.900" height="2"/><rect x="16.200" y="22.200" width="1.900" height="2"/><rect x="16.200" y="25.200" width="1.900" height="2"/><rect x="16.200" y="28.200" width="1.900" height="2"/><rect x="16.200" y="31.200" width="1.900" height="2"/></g><path d="M20.800 13.500 Q22.500 14.500 23 16 Q28 19 28.200 24 Q28.400 28.500 26 31.500 Q27 26 23.600 22.500 L23.800 34 L21.300 34.500 Z" fill="#8098a8" stroke="#1c6cc4" stroke-width=".6" stroke-linejoin="round"/><ellipse cx="17.400" cy="35.200" rx="6.600" ry="4.500" fill="#8098a8" stroke="#1464bc" stroke-width=".7" transform="rotate(-14 17.400 35.200)"/><ellipse cx="15.800" cy="33.600" rx="3.200" ry="1.500" fill="#8cccff" fill-opacity=".75" transform="rotate(-14 15.800 33.600)"/></g><rect x="29.800" y="24.800" width="17.500" height="17.500" rx="2" fill="#9db0bb" stroke="#afc1cb" stroke-width="1"/><path d="M35 28.200 L45.300 34.300 L35 40.500Z" fill="#b2c3cd" stroke="#c0d0d8" stroke-width="1" stroke-linejoin="round"/></symbol><symbol id="ic_help" viewBox="0 0 48 48"><ellipse cx="24.500" cy="26" rx="21" ry="20.500" fill="#4c6474" fill-opacity=".22"/><circle cx="24" cy="24" r="21.300" fill="url(#gHelpR)" stroke="#9aa6b4" stroke-width=".8"/><circle cx="24" cy="24" r="17" fill="url(#gHelp)" stroke="#2a6cc8" stroke-width=".8"/><text x="24" y="34.500" text-anchor="middle" font-family="Liberation Sans,sans-serif" font-weight="bold" font-size="31" fill="#ececfc" stroke="#ececfc" stroke-width=".5">?</text></symbol><symbol id="ic_script" viewBox="0 0 48 46"><path d="M2.500 .6 L16.500 .6 L25.500 9.600 L25.500 35.400 L2.500 35.400Z" fill="url(#gDoc)" stroke="#3f5f88" stroke-width="1" stroke-linejoin="round"/><path d="M16.500 .6 L16.500 9.600 L25.500 9.600Z" fill="#8cc8f0" stroke="#3f5f88" stroke-width=".8" stroke-linejoin="round"/><path d="M17.300 2.800 L17.300 8.800 L23.300 8.800Z" fill="#c8e8fc"/><path d="M19.500 10.800 L33.800 10.800 L45.500 21.800 L45.500 45.300 L19.500 45.300Z" fill="url(#gDoc)" stroke="#3f5f88" stroke-width="1" stroke-linejoin="round"/><path d="M33.800 10.800 L33.800 21.800 L45.500 21.800Z" fill="#8cc8f0" stroke="#3f5f88" stroke-width=".8" stroke-linejoin="round"/><path d="M34.600 13.200 L34.600 21 L43 21Z" fill="#c8e8fc"/><g transform="translate(22.200,23.600)"><path d="M9.00 -1.89 L11.71 -1.48 L11.71 1.48 L9.00 1.89 L8.40 3.76 L10.34 5.68 L8.60 8.08 L6.17 6.82 L4.58 7.98 L5.02 10.68 L2.21 11.59 L0.98 9.15 L-0.98 9.15 L-2.21 11.59 L-5.02 10.68 L-4.58 7.98 L-6.17 6.82 L-8.60 8.08 L-10.34 5.68 L-8.40 3.76 L-9.00 1.89 L-11.71 1.48 L-11.71 -1.48 L-9.00 -1.89 L-8.40 -3.76 L-10.34 -5.68 L-8.60 -8.08 L-6.17 -6.82 L-4.58 -7.98 L-5.02 -10.68 L-2.21 -11.59 L-0.98 -9.15 L0.98 -9.15 L2.21 -11.59 L5.02 -10.68 L4.58 -7.98 L6.17 -6.82 L8.60 -8.08 L10.34 -5.68 L8.40 -3.76Z" fill="url(#gGear)" stroke="#8a84bc" stroke-width=".9" stroke-linejoin="round"/><circle r="6" fill="none" stroke="#e4e0f6" stroke-width="1" stroke-opacity=".55"/><circle r="2.600" fill="#fff" stroke="#8a84bc" stroke-width=".9"/></g></symbol><symbol id="appicon" viewBox="0 0 17 15"><path d="M1 3 Q5 .5 9 3 L9 9 Q5 11.500 1 9Z" fill="#d8e4f4" stroke="#7c94c0" stroke-width=".8"/><ellipse cx="5" cy="3" rx="4" ry="1.600" fill="#f4f8fc" stroke="#7c94c0" stroke-width=".6"/><path d="M1 5.500 Q5 8 9 5.500" fill="none" stroke="#9cb0d0" stroke-width=".7"/><rect x="5.500" y="5.500" width="10.500" height="7.500" rx="1" fill="#2c7cd8" stroke="#184c98" stroke-width=".9"/><rect x="6.500" y="6.500" width="8.500" height="5" fill="#58b0f4"/><path d="M8 14.300 h6" stroke="#506888" stroke-width="1.200"/></symbol><symbol id="flag" viewBox="0 0 17 11"><rect x=".5" y=".5" width="16" height="10" fill="#fff" stroke="#c8c8d0" stroke-width=".6"/><g fill="#d83030"><rect x="7" y="1" width="9.500" height="1.300"/><rect x="7" y="3.600" width="9.500" height="1.300"/><rect x=".5" y="6.200" width="16" height="1.300"/><rect x=".5" y="8.800" width="16" height="1.300"/></g><rect x=".5" y=".5" width="7" height="5.200" fill="#2848a8"/><g fill="#fff"><rect x="1.500" y="1.500" width="1" height="1"/><rect x="3.500" y="1.500" width="1" height="1"/><rect x="5.500" y="1.500" width="1" height="1"/><rect x="2.500" y="3.200" width="1" height="1"/><rect x="4.500" y="3.200" width="1" height="1"/></g></symbol><symbol id="ph" viewBox="0 0 100 96"><rect x="15.500" y="28.500" width="80" height="62" fill="#ebebeb" fill-opacity=".38" stroke="#000" stroke-opacity=".04" stroke-width="1"/><rect x="23" y="35" width="65" height="47.500" fill="#8c8c8c" fill-opacity=".23"/><path d="M23 57.500 Q34 57 46 66 Q58 74 68 72 Q76 70 81 63 Q85 59 88 60 L88 82.500 L23 82.500Z" fill="#606060" fill-opacity=".14"/><path d="M23 65 Q36 63 49 72 Q60 79 72 80 L88 80 L88 82.500 L23 82.500Z" fill="#fff" fill-opacity=".22"/><circle cx="63.700" cy="63" r="13.800" fill="#fff" fill-opacity=".22"/><path d="M46.500 4 Q47 2.500 48.700 2.500 L67.500 2.500 Q70 2.500 70.600 5.500 L71.400 11.500 L71.400 57 Q71.400 59.800 69.500 60.500 L12 78 Q9.800 78.500 9.600 76 L9 14.500 Q9 12.800 11 12.600 L43.700 11 Z" fill="#e8e8e8" fill-opacity=".20" stroke="#000" stroke-opacity=".08" stroke-width="1.200" stroke-linejoin="round"/><path d="M.8 22.500 Q.7 20.800 2.500 20.600 L64.500 16 Q66.100 16 66.100 17.800 L66.100 58 Q66.100 60 64.500 60.500 L7.500 78.300 Q5.200 78.800 4.900 76.500 Q2 50 .8 22.500Z" fill="#e8e8e8" fill-opacity=".20" stroke="#000" stroke-opacity=".08" stroke-width="1.200" stroke-linejoin="round"/><path d="M28.500 43.500 Q33 39.500 37.500 45 Q42 41.500 46.500 46 M39.500 52 Q43 48.500 46 52 Q49 50 51.500 52.500 M30 52.500 Q34 52.500 37 56" fill="none" stroke="#000" stroke-opacity=".24" stroke-width="1.300" stroke-linecap="round"/></symbol></defs></svg>
<div style="left:0px;top:0px;width:1600px;height:22px;background:linear-gradient(90deg,#a9b6dc 0,#c3cbe9 2%,#c0c9e8 15%,#a9b8e2 17%,#8aa2da 18.500%,#7490d2 21%,#6a87cc 30%,#6a88cd 45%,#7c99d6 49%,#7d9ad7 53%,#6c8bcf 58%,#5173bd 64%,#496bb7 75%,#4a6cb8 88%,#6685c6 92%,#6e8ccb 100%)"></div>
<div style="left:0px;top:0px;width:1600px;height:20px;background:linear-gradient(rgba(70,95,190,.42) 0,rgba(120,140,215,.18) 15%,rgba(255,255,255,.12) 30%,rgba(255,255,255,.04) 50%,rgba(255,255,255,0) 70%,rgba(20,30,70,.06))"></div>
<div style="left:0px;top:20px;width:1600px;height:1px;background:#dde5f5"></div>
<div style="left:0px;top:21px;width:1600px;height:1px;background:#4f6475"></div>
<svg class="i" style="left:1px;top:4px" width="16" height="14" ><use href="#appicon"/></svg>
<div class="t" style="left:21px;top:4px;font-size:12px;letter-spacing:-.14px;text-shadow:0 0 6px #fff,0 0 4px #fff,0 0 9px #fff;">Домашний медиа-сервер (UPnP, DLNA, HTTP)</div>
<svg class="i" style="left:1359px;top:10px" width="17" height="11" ><use href="#flag"/></svg>
<div style="left:1493px;top:0px;width:105px;height:18px;border:1px solid #35415f;border-top:0;border-radius:0 0 5px 5px;background:rgba(255,255,255,.25);overflow:hidden"><div style="left:0;top:0;width:28px;height:17px;background:linear-gradient(#c3cde6,#a9b8dc 45%,#8399cd 50%,#a5b6dd);border-right:1px solid #35415f"></div><div style="left:28px;top:0;width:27px;height:17px;background:linear-gradient(#c3cde6,#a9b8dc 45%,#8399cd 50%,#a5b6dd);border-right:1px solid #35415f"></div><div style="left:55px;top:0;width:48px;height:17px;background:linear-gradient(#e2a496,#d47a68 45%,#c23c22 50%,#d4694e)"></div></div>
<svg class="i" style="left:1493px;top:0" width="105" height="18"><rect x="10.500" y="8.500" width="11" height="3" rx=".5" fill="#fff" stroke="#4a5670" stroke-width="1"/><rect x="39.500" y="3.500" width="8" height="7" fill="none" stroke="#4a5670" stroke-width="3"/><rect x="39.500" y="3.500" width="8" height="7" fill="none" stroke="#fff" stroke-width="1.400"/><rect x="36.500" y="6.500" width="8" height="6.500" fill="#9fb0d8" stroke="#4a5670" stroke-width="3"/><rect x="36.500" y="6.500" width="8" height="6.500" fill="#9fb0d8" stroke="#fff" stroke-width="1.400"/><path d="M77 4.500 L84 11 M84 4.500 L77 11" stroke="#5a3030" stroke-width="4" stroke-linecap="square"/><path d="M77 4.500 L84 11 M84 4.500 L77 11" stroke="#fff" stroke-width="2.300" stroke-linecap="square"/></svg>
<div style="left:0px;top:22px;width:1600px;height:76px;background:linear-gradient(#b3c8d2 0,#aac1cc 4%,#a7becb 30%,#9fb6c3 50%,#94acb9 65%,#7f98a6 85%,#728c9a 95%,#6f8997 96.500%,#a5bcc8 97.500%,#8aa3b0 99%,#7b95a3 100%)"></div>
<div style="left:0px;top:22px;width:2px;height:76px;background:#7d97a5"></div>
<div style="left:5px;top:27px;width:2px;height:64px;background:repeating-linear-gradient(#2a3a48 0,#2a3a48 2px,transparent 2px,transparent 4px);opacity:.85"></div>
<svg class="i" style="left:22px;top:26px" width="48" height="48" ><use href="#ic_films"/></svg>
<div class="t c l" style="left:-3px;top:77px;width:100px;color:#000;">Фильмы</div>
<svg class="i" style="left:98px;top:26px" width="48" height="48" ><use href="#ic_music"/></svg>
<div class="t c l" style="left:72px;top:77px;width:100px;color:#000;">Музыка</div>
<svg class="i" style="left:173px;top:26px" width="48" height="48" ><use href="#ic_photo"/></svg>
<div class="t c l" style="left:147px;top:77px;width:100px;color:#000;">Фото</div>
<svg class="i" style="left:263px;top:26px" width="48" height="48" ><use href="#ic_refresh"/></svg>
<div class="t c l" style="left:237px;top:77px;width:100px;color:#000;">Обновить</div>
<svg class="i" style="left:353px;top:26px" width="48" height="48" ><use href="#ic_settings"/></svg>
<div class="t c l" style="left:327px;top:77px;width:100px;color:#000;">Настройки</div>
<svg class="i" style="left:443px;top:26px" width="48" height="48" ><use href="#ic_start"/></svg>
<div class="t c l" style="left:417px;top:77px;width:100px;color:#000;">Запуск</div>
<svg class="i" style="left:518px;top:26px" width="48" height="48" ><use href="#ic_stop"/></svg>
<div class="t c l" style="left:492px;top:77px;width:100px;color:#6b7880;">Остановка</div>
<svg class="i" style="left:593px;top:26px" width="48" height="48" ><use href="#ic_restart"/></svg>
<div class="t c l" style="left:567px;top:77px;width:100px;color:#6b7880;">Перезапуск</div>
<div style="left:1515px;top:27px;width:1px;height:66px;background:#5d7684"></div>
<div style="left:1516px;top:27px;width:1px;height:66px;background:#b4c8d2;opacity:.6"></div>
<svg class="i" style="left:1534px;top:27px" width="48" height="48" ><use href="#ic_help"/></svg>
<div class="t c l" style="left:1507px;top:77px;width:100px;">Помощь</div>
<div style="left:2px;top:98px;width:584px;height:18px;background:#112838"></div>
<div class="t" style="left:5px;top:100px;color:#fff">Папки [Фильмы]</div>
<svg class="i" style="left:544px;top:99px" width="40" height="16"><path d="M7.500 4 L7.500 13 L3 8.500 Z" fill="#fff"/><path d="M16 5 h4.500 v5.500 h-4.500 z" fill="none" stroke="#fff" stroke-width="1"/><rect x="19" y="4.500" width="2" height="6" fill="#fff"/><rect x="14" y="10" width="8.500" height="1.200" fill="#fff"/><rect x="17.700" y="11" width="1.200" height="3.500" fill="#fff"/><path d="M28.500 5 L36 12.500 M36 5 L28.500 12.500" stroke="#fff" stroke-width="1.100"/></svg>
<div style="left:2px;top:116px;width:584px;height:3px;background:linear-gradient(#6a8493,#8aa2af)"></div>
<div style="left:2px;top:119px;width:567px;height:18px;background:linear-gradient(#7f98a6,#7a93a1 40%,#768f9d 80%,#6a8492);border-bottom:1px solid #4a6473"></div>
<div style="left:388px;top:120px;width:1px;height:16px;background:#5d7685"></div>
<div style="left:389px;top:120px;width:1px;height:16px;background:#92a9b5"></div>
<div style="left:478px;top:120px;width:1px;height:16px;background:#5d7685"></div>
<div style="left:479px;top:120px;width:1px;height:16px;background:#92a9b5"></div>
<div style="left:508px;top:120px;width:1px;height:16px;background:#5d7685"></div>
<div style="left:509px;top:120px;width:1px;height:16px;background:#92a9b5"></div>
<div style="left:537px;top:120px;width:1px;height:16px;background:#5d7685"></div>
<div style="left:538px;top:120px;width:1px;height:16px;background:#92a9b5"></div>
<div style="left:567px;top:120px;width:1px;height:16px;background:#5d7685"></div>
<div style="left:568px;top:120px;width:1px;height:16px;background:#92a9b5"></div>
<div class="t c" style="left:390px;top:121px;width:88px;">Оценка</div>
<svg class="i" style="left:486px;top:120px" width="16" height="16" ><use href="#users"/></svg>
<svg class="i" style="left:516px;top:120px" width="16" height="16" ><use href="#key"/></svg>
<svg class="i" style="left:539px;top:120px" width="15" height="16" ><use href="#arrowbars"/></svg>
<svg class="i" style="left:554px;top:122px" width="10" height="10"><path d="M5 1.500 L8.500 8.500 L1.500 8.500 Z" fill="#8da5b2" stroke="#cfdce3" stroke-width="1"/></svg>
<div style="left:2px;top:137px;width:567px;height:692px;background:#fff"></div>
<div style="left:0px;top:98px;width:2px;height:782px;background:#6f8998"></div>
<div style="left:569px;top:118px;width:17px;height:711px;background:#f0f0f0;border-left:1px solid #e4e4e4"></div>
<svg class="i" style="left:569px;top:118px" width="17" height="711"><path d="M5 11 L9 7 L13 11 Z" fill="#404040"/><path d="M5 700 L13 700 L9 704 Z" fill="#404040"/><rect x="1.500" y="46.500" width="14" height="27" rx="2" fill="#e9e9e9" stroke="#9a9a9a"/><rect x="2.500" y="47.500" width="12" height="25" rx="1.500" fill="none" stroke="#fff"/><path d="M5 57.500 h7 M5 60.500 h7 M5 63.500 h7" stroke="#606060" stroke-width="1"/></svg>
<div style="left:3px;top:137px;width:566px;height:692px;overflow:hidden">
<div style="left:8px;top:0px;width:1px;height:692px;background:repeating-linear-gradient(#9a9a9a 0,#9a9a9a 1px,transparent 1px,transparent 2px)"></div>
<div style="left:27px;top:15px;width:1px;height:677px;background:repeating-linear-gradient(#9a9a9a 0,#9a9a9a 1px,transparent 1px,transparent 2px)"></div>
<div style="left:46px;top:19px;width:1px;height:673px;background:repeating-linear-gradient(#9a9a9a 0,#9a9a9a 1px,transparent 1px,transparent 2px)"></div>
<div style="left:65px;top:76px;width:1px;height:616px;background:repeating-linear-gradient(#9a9a9a 0,#9a9a9a 1px,transparent 1px,transparent 2px)"></div>
<div style="left:84px;top:133px;width:1px;height:559px;background:repeating-linear-gradient(#9a9a9a 0,#9a9a9a 1px,transparent 1px,transparent 2px)"></div>
<div style="left:33px;top:9px;width:5px;height:1px;background:repeating-linear-gradient(90deg,#9a9a9a 0,#9a9a9a 1px,transparent 1px,transparent 2px)"></div>
<svg class="i" style="left:22px;top:4px" width="11" height="11"><use href="#minus"/></svg>
<svg class="i" style="left:38px;top:1px" width="16" height="16"><use href="#rssfolder"/></svg>
<div class="t" style="left:58px;top:2px">Kodik</div>
<svg class="i" style="left:391px;top:2px" width="82" height="17"><use href="#stars"/></svg>
<div style="left:52px;top:28px;width:5px;height:1px;background:repeating-linear-gradient(90deg,#9a9a9a 0,#9a9a9a 1px,transparent 1px,transparent 2px)"></div>
<svg class="i" style="left:41px;top:23px" width="11" height="11"><use href="#plus"/></svg>
<svg class="i" style="left:57px;top:20px" width="16" height="16"><use href="#rssfolder"/></svg>
<div class="t" style="left:77px;top:21px">02. По годам</div>
<svg class="i" style="left:391px;top:21px" width="82" height="17"><use href="#stars"/></svg>
<svg class="i" style="left:544px;top:21px;" width="15" height="16"><use href="#arrowbars"/></svg>
<div style="left:52px;top:47px;width:5px;height:1px;background:repeating-linear-gradient(90deg,#9a9a9a 0,#9a9a9a 1px,transparent 1px,transparent 2px)"></div>
<svg class="i" style="left:41px;top:42px" width="11" height="11"><use href="#plus"/></svg>
<svg class="i" style="left:57px;top:39px" width="16" height="16"><use href="#rss"/></svg>
<div class="t" style="left:77px;top:40px">03. Сериалы</div>
<svg class="i" style="left:391px;top:40px" width="82" height="17"><use href="#stars"/></svg>
<svg class="i" style="left:544px;top:40px;" width="15" height="16"><use href="#arrowbars"/></svg>
<div style="left:52px;top:66px;width:5px;height:1px;background:repeating-linear-gradient(90deg,#9a9a9a 0,#9a9a9a 1px,transparent 1px,transparent 2px)"></div>
<svg class="i" style="left:41px;top:61px" width="11" height="11"><use href="#minus"/></svg>
<svg class="i" style="left:57px;top:58px" width="16" height="16"><use href="#rss"/></svg>
<div class="t" style="left:77px;top:59px">04. Все фильмы</div>
<svg class="i" style="left:391px;top:59px" width="82" height="17"><use href="#stars"/></svg>
<svg class="i" style="left:544px;top:59px;" width="15" height="16"><use href="#arrowbars"/></svg>
<div style="left:71px;top:85px;width:5px;height:1px;background:repeating-linear-gradient(90deg,#9a9a9a 0,#9a9a9a 1px,transparent 1px,transparent 2px)"></div>
<svg class="i" style="left:60px;top:80px" width="11" height="11"><use href="#plus"/></svg>
<svg class="i" style="left:77px;top:78px" width="14" height="14"><use href="#cube"/></svg>
<div class="t" style="left:96px;top:78px">#</div>
<svg class="i" style="left:391px;top:78px" width="82" height="17"><use href="#stars"/></svg>
<svg class="i" style="left:544px;top:78px;" width="15" height="16"><use href="#arrowbars"/></svg>
<div style="left:71px;top:104px;width:5px;height:1px;background:repeating-linear-gradient(90deg,#9a9a9a 0,#9a9a9a 1px,transparent 1px,transparent 2px)"></div>
<svg class="i" style="left:60px;top:99px" width="11" height="11"><use href="#plus"/></svg>
<svg class="i" style="left:77px;top:97px" width="14" height="14"><use href="#cube"/></svg>
<div class="t" style="left:96px;top:97px">A..Z</div>
<svg class="i" style="left:391px;top:97px" width="82" height="17"><use href="#stars"/></svg>
<svg class="i" style="left:544px;top:97px;" width="15" height="16"><use href="#arrowbars"/></svg>
<div style="left:71px;top:123px;width:5px;height:1px;background:repeating-linear-gradient(90deg,#9a9a9a 0,#9a9a9a 1px,transparent 1px,transparent 2px)"></div>
<svg class="i" style="left:60px;top:118px" width="11" height="11"><use href="#minus"/></svg>
<svg class="i" style="left:77px;top:116px" width="14" height="14"><use href="#cube"/></svg>
<div style="left:94px;top:114px;width:292px;height:19px;background:#3399ff;border:1px dotted rgba(20,70,150,.55)"></div>
<div class="t" style="left:96px;top:116px;color:#fff">А</div>
<svg class="i" style="left:391px;top:116px" width="82" height="17"><use href="#stars"/></svg>
<svg class="i" style="left:544px;top:116px;" width="15" height="16"><use href="#arrowbars"/></svg>
<div style="left:90px;top:142px;width:5px;height:1px;background:repeating-linear-gradient(90deg,#9a9a9a 0,#9a9a9a 1px,transparent 1px,transparent 2px)"></div>
<svg class="i" style="left:79px;top:137px" width="11" height="11"><use href="#plus"/></svg>
<svg class="i" style="left:96px;top:135px" width="14" height="14"><use href="#cube"/></svg>
<div class="t" style="left:115px;top:135px">...А в душе я танцую</div>
<svg class="i" style="left:391px;top:135px" width="82" height="17"><use href="#stars"/></svg>
<svg class="i" style="left:544px;top:135px;opacity:.27;" width="15" height="16"><use href="#arrowbars"/></svg>
<div style="left:90px;top:161px;width:5px;height:1px;background:repeating-linear-gradient(90deg,#9a9a9a 0,#9a9a9a 1px,transparent 1px,transparent 2px)"></div>
<svg class="i" style="left:79px;top:156px" width="11" height="11"><use href="#plus"/></svg>
<svg class="i" style="left:96px;top:154px" width="14" height="14"><use href="#cube"/></svg>
<div class="t" style="left:115px;top:154px">А вот и она</div>
<svg class="i" style="left:391px;top:154px" width="82" height="17"><use href="#stars"/></svg>
<svg class="i" style="left:544px;top:154px;opacity:.27;" width="15" height="16"><use href="#arrowbars"/></svg>
<div style="left:90px;top:180px;width:5px;height:1px;background:repeating-linear-gradient(90deg,#9a9a9a 0,#9a9a9a 1px,transparent 1px,transparent 2px)"></div>
<svg class="i" style="left:79px;top:175px" width="11" height="11"><use href="#plus"/></svg>
<svg class="i" style="left:96px;top:173px" width="14" height="14"><use href="#cube"/></svg>
<div class="t" style="left:115px;top:173px">А вот и Полли</div>
<svg class="i" style="left:391px;top:173px" width="82" height="17"><use href="#stars"/></svg>
<svg class="i" style="left:544px;top:173px;opacity:.27;" width="15" height="16"><use href="#arrowbars"/></svg>
<div style="left:90px;top:199px;width:5px;height:1px;background:repeating-linear-gradient(90deg,#9a9a9a 0,#9a9a9a 1px,transparent 1px,transparent 2px)"></div>
<svg class="i" style="left:79px;top:194px" width="11" height="11"><use href="#plus"/></svg>
<svg class="i" style="left:96px;top:192px" width="14" height="14"><use href="#cube"/></svg>
<div class="t" style="left:115px;top:192px">А зори здесь тихие...</div>
<svg class="i" style="left:391px;top:192px" width="82" height="17"><use href="#stars"/></svg>
<svg class="i" style="left:544px;top:192px;opacity:.27;" width="15" height="16"><use href="#arrowbars"/></svg>
<div style="left:90px;top:218px;width:5px;height:1px;background:repeating-linear-gradient(90deg,#9a9a9a 0,#9a9a9a 1px,transparent 1px,transparent 2px)"></div>
<svg class="i" style="left:79px;top:213px" width="11" height="11"><use href="#plus"/></svg>
<svg class="i" style="left:96px;top:211px" width="14" height="14"><use href="#cube"/></svg>
<div class="t" style="left:115px;top:211px">А как же Боб?</div>
<svg class="i" style="left:391px;top:211px" width="82" height="17"><use href="#stars"/></svg>
<svg class="i" style="left:544px;top:211px;opacity:.27;" width="15" height="16"><use href="#arrowbars"/></svg>
<div style="left:90px;top:237px;width:5px;height:1px;background:repeating-linear-gradient(90deg,#9a9a9a 0,#9a9a9a 1px,transparent 1px,transparent 2px)"></div>
<svg class="i" style="left:79px;top:232px" width="11" height="11"><use href="#plus"/></svg>
<svg class="i" style="left:96px;top:230px" width="14" height="14"><use href="#cube"/></svg>
<div class="t" style="left:115px;top:230px">А потом тишина</div>
<svg class="i" style="left:391px;top:230px" width="82" height="17"><use href="#stars"/></svg>
<svg class="i" style="left:544px;top:230px;opacity:.27;" width="15" height="16"><use href="#arrowbars"/></svg>
<div style="left:90px;top:256px;width:5px;height:1px;background:repeating-linear-gradient(90deg,#9a9a9a 0,#9a9a9a 1px,transparent 1px,transparent 2px)"></div>
<svg class="i" style="left:79px;top:251px" width="11" height="11"><use href="#plus"/></svg>
<svg class="i" style="left:96px;top:249px" width="14" height="14"><use href="#cube"/></svg>
<div class="t" style="left:115px;top:249px">А потом... Съел?</div>
<svg class="i" style="left:391px;top:249px" width="82" height="17"><use href="#stars"/></svg>
<svg class="i" style="left:544px;top:249px;opacity:.27;" width="15" height="16"><use href="#arrowbars"/></svg>
<div style="left:90px;top:275px;width:5px;height:1px;background:repeating-linear-gradient(90deg,#9a9a9a 0,#9a9a9a 1px,transparent 1px,transparent 2px)"></div>
<svg class="i" style="left:79px;top:270px" width="11" height="11"><use href="#plus"/></svg>
<svg class="i" style="left:96px;top:268px" width="14" height="14"><use href="#cube"/></svg>
<div class="t" style="left:115px;top:268px">А поутру они проснулись</div>
<svg class="i" style="left:391px;top:268px" width="82" height="17"><use href="#stars"/></svg>
<svg class="i" style="left:544px;top:268px;opacity:.27;" width="15" height="16"><use href="#arrowbars"/></svg>
<div style="left:90px;top:294px;width:5px;height:1px;background:repeating-linear-gradient(90deg,#9a9a9a 0,#9a9a9a 1px,transparent 1px,transparent 2px)"></div>
<svg class="i" style="left:79px;top:289px" width="11" height="11"><use href="#plus"/></svg>
<svg class="i" style="left:96px;top:287px" width="14" height="14"><use href="#cube"/></svg>
<div class="t" style="left:115px;top:287px">А скоро колледж?</div>
<svg class="i" style="left:391px;top:287px" width="82" height="17"><use href="#stars"/></svg>
<svg class="i" style="left:544px;top:287px;opacity:.27;" width="15" height="16"><use href="#arrowbars"/></svg>
<div style="left:90px;top:313px;width:5px;height:1px;background:repeating-linear-gradient(90deg,#9a9a9a 0,#9a9a9a 1px,transparent 1px,transparent 2px)"></div>
<svg class="i" style="left:79px;top:308px" width="11" height="11"><use href="#plus"/></svg>
<svg class="i" style="left:96px;top:306px" width="14" height="14"><use href="#cube"/></svg>
<div class="t" style="left:115px;top:306px">А скоро осень?</div>
<svg class="i" style="left:391px;top:306px" width="82" height="17"><use href="#stars"/></svg>
<svg class="i" style="left:544px;top:306px;opacity:.27;" width="15" height="16"><use href="#arrowbars"/></svg>
<div style="left:90px;top:332px;width:5px;height:1px;background:repeating-linear-gradient(90deg,#9a9a9a 0,#9a9a9a 1px,transparent 1px,transparent 2px)"></div>
<svg class="i" style="left:79px;top:327px" width="11" height="11"><use href="#plus"/></svg>
<svg class="i" style="left:96px;top:325px" width="14" height="14"><use href="#cube"/></svg>
<div class="t" style="left:115px;top:325px">А спорим?</div>
<svg class="i" style="left:391px;top:325px" width="82" height="17"><use href="#stars"/></svg>
<svg class="i" style="left:544px;top:325px;opacity:.27;" width="15" height="16"><use href="#arrowbars"/></svg>
<div style="left:90px;top:351px;width:5px;height:1px;background:repeating-linear-gradient(90deg,#9a9a9a 0,#9a9a9a 1px,transparent 1px,transparent 2px)"></div>
<svg class="i" style="left:79px;top:346px" width="11" height="11"><use href="#plus"/></svg>
<svg class="i" style="left:96px;top:344px" width="14" height="14"><use href="#cube"/></svg>
<div class="t" style="left:115px;top:344px">А теперь кое-что...</div>
<svg class="i" style="left:391px;top:344px" width="82" height="17"><use href="#stars"/></svg>
<svg class="i" style="left:544px;top:344px;opacity:.27;" width="15" height="16"><use href="#arrowbars"/></svg>
<div style="left:90px;top:370px;width:5px;height:1px;background:repeating-linear-gradient(90deg,#9a9a9a 0,#9a9a9a 1px,transparent 1px,transparent 2px)"></div>
<svg class="i" style="left:79px;top:365px" width="11" height="11"><use href="#plus"/></svg>
<svg class="i" style="left:96px;top:363px" width="14" height="14"><use href="#cube"/></svg>
<div class="t" style="left:115px;top:363px">А теперь не смотри</div>
<svg class="i" style="left:391px;top:363px" width="82" height="17"><use href="#stars"/></svg>
<svg class="i" style="left:544px;top:363px;opacity:.27;" width="15" height="16"><use href="#arrowbars"/></svg>
<div style="left:90px;top:389px;width:5px;height:1px;background:repeating-linear-gradient(90deg,#9a9a9a 0,#9a9a9a 1px,transparent 1px,transparent 2px)"></div>
<svg class="i" style="left:79px;top:384px" width="11" height="11"><use href="#plus"/></svg>
<svg class="i" style="left:96px;top:382px" width="14" height="14"><use href="#cube"/></svg>
<div class="t" style="left:115px;top:382px">А теперь я иду встретиться с тобой</div>
<svg class="i" style="left:391px;top:382px" width="82" height="17"><use href="#stars"/></svg>
<svg class="i" style="left:544px;top:382px;opacity:.27;" width="15" height="16"><use href="#arrowbars"/></svg>
<div style="left:90px;top:408px;width:5px;height:1px;background:repeating-linear-gradient(90deg,#9a9a9a 0,#9a9a9a 1px,transparent 1px,transparent 2px)"></div>
<svg class="i" style="left:79px;top:403px" width="11" height="11"><use href="#plus"/></svg>
<svg class="i" style="left:96px;top:401px" width="14" height="14"><use href="#cube"/></svg>
<div class="t" style="left:115px;top:401px">А что насчет тебя?</div>
<svg class="i" style="left:391px;top:401px" width="82" height="17"><use href="#stars"/></svg>
<svg class="i" style="left:544px;top:401px;opacity:.27;" width="15" height="16"><use href="#arrowbars"/></svg>
<div style="left:90px;top:427px;width:5px;height:1px;background:repeating-linear-gradient(90deg,#9a9a9a 0,#9a9a9a 1px,transparent 1px,transparent 2px)"></div>
<svg class="i" style="left:79px;top:422px" width="11" height="11"><use href="#plus"/></svg>
<svg class="i" style="left:96px;top:420px" width="14" height="14"><use href="#cube"/></svg>
<div class="t" style="left:115px;top:420px">А что потом?</div>
<svg class="i" style="left:391px;top:420px" width="82" height="17"><use href="#stars"/></svg>
<svg class="i" style="left:544px;top:420px;opacity:.27;" width="15" height="16"><use href="#arrowbars"/></svg>
<div style="left:90px;top:446px;width:5px;height:1px;background:repeating-linear-gradient(90deg,#9a9a9a 0,#9a9a9a 1px,transparent 1px,transparent 2px)"></div>
<svg class="i" style="left:79px;top:441px" width="11" height="11"><use href="#plus"/></svg>
<svg class="i" style="left:96px;top:439px" width="14" height="14"><use href="#cube"/></svg>
<div class="t" style="left:115px;top:439px">А что, если поесть шпината?</div>
<svg class="i" style="left:391px;top:439px" width="82" height="17"><use href="#stars"/></svg>
<svg class="i" style="left:544px;top:439px;opacity:.27;" width="15" height="16"><use href="#arrowbars"/></svg>
<div style="left:90px;top:465px;width:5px;height:1px;background:repeating-linear-gradient(90deg,#9a9a9a 0,#9a9a9a 1px,transparent 1px,transparent 2px)"></div>
<svg class="i" style="left:79px;top:460px" width="11" height="11"><use href="#plus"/></svg>
<svg class="i" style="left:96px;top:458px" width="14" height="14"><use href="#cube"/></svg>
<div class="t" style="left:115px;top:458px">А я люблю женатого</div>
<svg class="i" style="left:391px;top:458px" width="82" height="17"><use href="#stars"/></svg>
<svg class="i" style="left:544px;top:458px;opacity:.27;" width="15" height="16"><use href="#arrowbars"/></svg>
<div style="left:90px;top:484px;width:5px;height:1px;background:repeating-linear-gradient(90deg,#9a9a9a 0,#9a9a9a 1px,transparent 1px,transparent 2px)"></div>
<svg class="i" style="left:79px;top:479px" width="11" height="11"><use href="#plus"/></svg>
<svg class="i" style="left:96px;top:477px" width="14" height="14"><use href="#cube"/></svg>
<div class="t" style="left:115px;top:477px">А.Р.О.Г.</div>
<svg class="i" style="left:391px;top:477px" width="82" height="17"><use href="#stars"/></svg>
<svg class="i" style="left:544px;top:477px;opacity:.27;" width="15" height="16"><use href="#arrowbars"/></svg>
<div style="left:90px;top:503px;width:5px;height:1px;background:repeating-linear-gradient(90deg,#9a9a9a 0,#9a9a9a 1px,transparent 1px,transparent 2px)"></div>
<svg class="i" style="left:79px;top:498px" width="11" height="11"><use href="#plus"/></svg>
<svg class="i" style="left:96px;top:496px" width="14" height="14"><use href="#cube"/></svg>
<div class="t" style="left:115px;top:496px">Абаджан</div>
<svg class="i" style="left:391px;top:496px" width="82" height="17"><use href="#stars"/></svg>
<svg class="i" style="left:544px;top:496px;opacity:.27;" width="15" height="16"><use href="#arrowbars"/></svg>
<div style="left:90px;top:522px;width:5px;height:1px;background:repeating-linear-gradient(90deg,#9a9a9a 0,#9a9a9a 1px,transparent 1px,transparent 2px)"></div>
<svg class="i" style="left:79px;top:517px" width="11" height="11"><use href="#plus"/></svg>
<svg class="i" style="left:96px;top:515px" width="14" height="14"><use href="#cube"/></svg>
<div class="t" style="left:115px;top:515px">Абатуар</div>
<svg class="i" style="left:391px;top:515px" width="82" height="17"><use href="#stars"/></svg>
<svg class="i" style="left:544px;top:515px;opacity:.27;" width="15" height="16"><use href="#arrowbars"/></svg>
<div style="left:90px;top:541px;width:5px;height:1px;background:repeating-linear-gradient(90deg,#9a9a9a 0,#9a9a9a 1px,transparent 1px,transparent 2px)"></div>
<svg class="i" style="left:79px;top:536px" width="11" height="11"><use href="#plus"/></svg>
<svg class="i" style="left:96px;top:534px" width="14" height="14"><use href="#cube"/></svg>
<div class="t" style="left:115px;top:534px">Абатуар</div>
<svg class="i" style="left:391px;top:534px" width="82" height="17"><use href="#stars"/></svg>
<svg class="i" style="left:544px;top:534px;opacity:.27;" width="15" height="16"><use href="#arrowbars"/></svg>
<div style="left:90px;top:560px;width:5px;height:1px;background:repeating-linear-gradient(90deg,#9a9a9a 0,#9a9a9a 1px,transparent 1px,transparent 2px)"></div>
<svg class="i" style="left:79px;top:555px" width="11" height="11"><use href="#plus"/></svg>
<svg class="i" style="left:96px;top:553px" width="14" height="14"><use href="#cube"/></svg>
<div class="t" style="left:115px;top:553px">Абатуар. Лабиринт страха</div>
<svg class="i" style="left:391px;top:553px" width="82" height="17"><use href="#stars"/></svg>
<svg class="i" style="left:544px;top:553px;opacity:.27;" width="15" height="16"><use href="#arrowbars"/></svg>
<div style="left:90px;top:579px;width:5px;height:1px;background:repeating-linear-gradient(90deg,#9a9a9a 0,#9a9a9a 1px,transparent 1px,transparent 2px)"></div>
<svg class="i" style="left:79px;top:574px" width="11" height="11"><use href="#plus"/></svg>
<svg class="i" style="left:96px;top:572px" width="14" height="14"><use href="#cube"/></svg>
<div class="t" style="left:115px;top:572px">Абориген</div>
<svg class="i" style="left:391px;top:572px" width="82" height="17"><use href="#stars"/></svg>
<svg class="i" style="left:544px;top:572px;opacity:.27;" width="15" height="16"><use href="#arrowbars"/></svg>
<div style="left:90px;top:598px;width:5px;height:1px;background:repeating-linear-gradient(90deg,#9a9a9a 0,#9a9a9a 1px,transparent 1px,transparent 2px)"></div>
<svg class="i" style="left:79px;top:593px" width="11" height="11"><use href="#plus"/></svg>
<svg class="i" style="left:96px;top:591px" width="14" height="14"><use href="#cube"/></svg>
<div class="t" style="left:115px;top:591px">Аборт: Женщины рассказывают</div>
<svg class="i" style="left:391px;top:591px" width="82" height="17"><use href="#stars"/></svg>
<svg class="i" style="left:544px;top:591px;opacity:.27;" width="15" height="16"><use href="#arrowbars"/></svg>
<div style="left:90px;top:617px;width:5px;height:1px;background:repeating-linear-gradient(90deg,#9a9a9a 0,#9a9a9a 1px,transparent 1px,transparent 2px)"></div>
<svg class="i" style="left:79px;top:612px" width="11" height="11"><use href="#plus"/></svg>
<svg class="i" style="left:96px;top:610px" width="14" height="14"><use href="#cube"/></svg>
<div class="t" style="left:115px;top:610px">Абракадабра</div>
<svg class="i" style="left:391px;top:610px" width="82" height="17"><use href="#stars"/></svg>
<svg class="i" style="left:544px;top:610px;opacity:.27;" width="15" height="16"><use href="#arrowbars"/></svg>
<div style="left:90px;top:636px;width:5px;height:1px;background:repeating-linear-gradient(90deg,#9a9a9a 0,#9a9a9a 1px,transparent 1px,transparent 2px)"></div>
<svg class="i" style="left:79px;top:631px" width="11" height="11"><use href="#plus"/></svg>
<svg class="i" style="left:96px;top:629px" width="14" height="14"><use href="#cube"/></svg>
<div class="t" style="left:115px;top:629px">Абсолон</div>
<svg class="i" style="left:391px;top:629px" width="82" height="17"><use href="#stars"/></svg>
<svg class="i" style="left:544px;top:629px;opacity:.27;" width="15" height="16"><use href="#arrowbars"/></svg>
<div style="left:90px;top:655px;width:5px;height:1px;background:repeating-linear-gradient(90deg,#9a9a9a 0,#9a9a9a 1px,transparent 1px,transparent 2px)"></div>
<svg class="i" style="left:79px;top:650px" width="11" height="11"><use href="#plus"/></svg>
<svg class="i" style="left:96px;top:648px" width="14" height="14"><use href="#cube"/></svg>
<div class="t" style="left:115px;top:648px">Абсолютная власть</div>
<svg class="i" style="left:391px;top:648px" width="82" height="17"><use href="#stars"/></svg>
<svg class="i" style="left:544px;top:648px;opacity:.27;" width="15" height="16"><use href="#arrowbars"/></svg>
<div style="left:90px;top:674px;width:5px;height:1px;background:repeating-linear-gradient(90deg,#9a9a9a 0,#9a9a9a 1px,transparent 1px,transparent 2px)"></div>
<svg class="i" style="left:79px;top:669px" width="11" height="11"><use href="#plus"/></svg>
<svg class="i" style="left:96px;top:667px" width="14" height="14"><use href="#cube"/></svg>
<div class="t" style="left:115px;top:667px">Абсолютная власть</div>
<svg class="i" style="left:391px;top:667px" width="82" height="17"><use href="#stars"/></svg>
<svg class="i" style="left:544px;top:667px;opacity:.27;" width="15" height="16"><use href="#arrowbars"/></svg>
<div style="left:90px;top:693px;width:5px;height:1px;background:repeating-linear-gradient(90deg,#9a9a9a 0,#9a9a9a 1px,transparent 1px,transparent 2px)"></div>
<svg class="i" style="left:79px;top:688px" width="11" height="11"><use href="#plus"/></svg>
<svg class="i" style="left:96px;top:686px" width="14" height="14"><use href="#cube"/></svg>
<div class="t" style="left:115px;top:686px">Абсолютная власть</div>
<svg class="i" style="left:391px;top:686px" width="82" height="17"><use href="#stars"/></svg>
<svg class="i" style="left:544px;top:686px;opacity:.27;" width="15" height="16"><use href="#arrowbars"/></svg>
</div>
<div style="left:2px;top:829px;width:584px;height:27px;background:linear-gradient(#a6bdc9,#9bb3c0 30%,#859eac 70%,#6f8997 96%,#5e7887)"></div>
<svg class="i" style="left:6px;top:833px" width="16" height="16" ><use href="#fedit"/></svg>
<svg class="i" style="left:31px;top:833px" width="16" height="16" ><use href="#fdel"/></svg>
<svg class="i" style="left:61px;top:833px" width="16" height="16" ><use href="#fcloud"/></svg>
<svg class="i" style="left:90px;top:833px" width="16" height="16" ><use href="#sun"/></svg>
<svg class="i" style="left:121px;top:833px" width="16" height="16" ><use href="#grid"/></svg>
<svg class="i" style="left:151px;top:833px" width="16" height="16" ><use href="#fback"/></svg>
<svg class="i" style="left:176px;top:833px" width="16" height="16" ><use href="#ffwd"/></svg>
<svg class="i" style="left:206px;top:833px" width="16" height="16" ><use href="#lifebuoy"/></svg>
<svg class="i" style="left:236px;top:833px" width="16" height="16" ><use href="#floppy"/></svg>
<svg class="i" style="left:261px;top:833px" width="16" height="16" ><use href="#fopen"/></svg>
<svg class="i" style="left:291px;top:833px" width="16" height="16" ><use href="#key"/></svg>
<svg class="i" style="left:321px;top:833px" width="16" height="16" ><use href="#users"/></svg>
<svg class="i" style="left:351px;top:833px" width="16" height="16" ><use href="#palm"/></svg>
<div style="left:2px;top:856px;width:584px;height:22px;background:linear-gradient(#b4c8d2 0,#a3bac6 8%,#93abb8 50%,#7e98a6 100%)"></div>
<div style="left:2px;top:856px;width:584px;height:1px;background:#5a7483"></div>
<div class="t" style="left:12px;top:859px;">Устройства воспроизведения (DMR)</div>
<div style="left:201px;top:860px;width:1px;height:15px;background:#cfdde4"></div>
<div style="left:200px;top:860px;width:1px;height:15px;background:#6a8493"></div>
<div class="t" style="left:207px;top:859px;">Журнал сообщений</div>
<div style="left:312px;top:856px;width:93px;height:20px;background:linear-gradient(#a9c0cc,#9db5c2);border:1px solid #3e5868;border-top:0"></div>
<div class="t" style="left:316px;top:859px;">Папки [Фильмы]</div>
<div style="left:586px;top:98px;width:4px;height:780px;background:linear-gradient(90deg,#647e8d,#748e9c 60%,#5a7483)"></div>
<div style="left:590px;top:98px;width:890px;height:18px;background:linear-gradient(#748e9c,#6f8998);border:1px solid #4a6473;border-radius:2px"></div>
<div class="t" style="left:594px;top:100px;">Список [Фильмы]</div>
<svg class="i" style="left:1450px;top:99px" width="30" height="16"><path d="M9 4 L9 13 L4.500 8.500 Z" fill="#000"/><path d="M18 5 h4.500 v5.500 h-4.500 z" fill="none" stroke="#000" stroke-width="1"/><rect x="21" y="4.500" width="2" height="6" fill="#000"/><rect x="16" y="10" width="8.500" height="1.200" fill="#000"/><rect x="19.700" y="11" width="1.200" height="3.500" fill="#000"/></svg>
<div style="left:590px;top:116px;width:890px;height:25px;background:linear-gradient(#7b95a3 0,#9db4c1 10%,#8ea6b3 40%,#728c9b 75%,#5f7988 90%,#4a6473 93%,#3f5969 100%)"></div>
<div style="left:596px;top:121px;width:52px;height:18px;background:linear-gradient(#8aa2af,#7b94a2 60%,#6d8795);border:1px solid #587281;border-right:0;border-top-color:#9fb5c1"></div>
<div class="t" style="left:600px;top:124px;">Таблица</div>
<div style="left:648px;top:120px;width:60px;height:20px;background:linear-gradient(#90a8b5,#869fad);border:1px solid #3b5565;border-bottom:0"></div>
<div class="t" style="left:652px;top:124px;">Карточки</div>
<div style="left:590px;top:141px;width:874px;height:693px;background:#fff;overflow:hidden"><div class="ib" style="left:10px;top:11px;width:181px;height:119px;background:#bbdcfb"><svg class="i" style="left:43px;top:7px" width="100" height="96"><use href="#ph"/></svg></div>
<div class="ti" style="left:10px;top:130px;width:181px;height:19px"></div>
<svg class="i" style="left:13px;top:136px" width="11" height="11"><use href="#minus"/></svg>
<div class="t c" style="left:26px;top:134px;width:165px">...А в душе я танцую</div>
<div class="hd" style="left:10px;top:150px;width:181px;height:16px"></div>
<div class="t c" style="left:10px;top:151px;width:181px">Описание</div>
<div class="hd" style="left:10px;top:218px;width:181px;height:16px"></div>
<div class="t c" style="left:10px;top:219px;width:181px">Режиссер</div>
<div class="hd" style="left:10px;top:252px;width:181px;height:16px"></div>
<div class="t c" style="left:10px;top:253px;width:181px">Актеры</div>
<div class="hd" style="left:10px;top:286px;width:181px;height:16px"></div>
<div class="t c" style="left:10px;top:287px;width:181px">Дата выпуска</div>
<div class="t c" style="left:10px;top:304px;width:181px">19.07.2018 1:23:00</div>
<div class="ib" style="left:204px;top:11px;width:181px;height:119px;background:#fff"><svg class="i" style="left:43px;top:7px" width="100" height="96"><use href="#ph"/></svg></div>
<div class="ti" style="left:204px;top:130px;width:181px;height:19px"></div>
<svg class="i" style="left:207px;top:136px" width="11" height="11"><use href="#minus"/></svg>
<div class="t c" style="left:220px;top:134px;width:165px">А вот и она</div>
<div class="hd" style="left:204px;top:150px;width:181px;height:16px"></div>
<div class="t c" style="left:204px;top:151px;width:181px">Описание</div>
<div class="hd" style="left:204px;top:218px;width:181px;height:16px"></div>
<div class="t c" style="left:204px;top:219px;width:181px">Режиссер</div>
<div class="hd" style="left:204px;top:252px;width:181px;height:16px"></div>
<div class="t c" style="left:204px;top:253px;width:181px">Актеры</div>
<div class="hd" style="left:204px;top:286px;width:181px;height:16px"></div>
<div class="t c" style="left:204px;top:287px;width:181px">Дата выпуска</div>
<div class="t c" style="left:204px;top:304px;width:181px">19.07.2018 1:43:00</div>
<div class="ib" style="left:398px;top:11px;width:181px;height:119px;background:#fff"><svg class="i" style="left:43px;top:7px" width="100" height="96"><use href="#ph"/></svg></div>
<div class="ti" style="left:398px;top:130px;width:181px;height:19px"></div>
<svg class="i" style="left:401px;top:136px" width="11" height="11"><use href="#minus"/></svg>
<div class="t c" style="left:414px;top:134px;width:165px">А вот и Полли</div>
<div class="hd" style="left:398px;top:150px;width:181px;height:16px"></div>
<div class="t c" style="left:398px;top:151px;width:181px">Описание</div>
<div class="hd" style="left:398px;top:218px;width:181px;height:16px"></div>
<div class="t c" style="left:398px;top:219px;width:181px">Режиссер</div>
<div class="hd" style="left:398px;top:252px;width:181px;height:16px"></div>
<div class="t c" style="left:398px;top:253px;width:181px">Актеры</div>
<div class="hd" style="left:398px;top:286px;width:181px;height:16px"></div>
<div class="t c" style="left:398px;top:287px;width:181px">Дата выпуска</div>
<div class="t c" style="left:398px;top:304px;width:181px">19.07.2018 0:12:00</div>
<div class="ib" style="left:592px;top:11px;width:181px;height:119px;background:#fff"><svg class="i" style="left:43px;top:7px" width="100" height="96"><use href="#ph"/></svg></div>
<div class="ti" style="left:592px;top:130px;width:181px;height:19px"></div>
<svg class="i" style="left:595px;top:136px" width="11" height="11"><use href="#minus"/></svg>
<div class="t c" style="left:608px;top:134px;width:165px">А зори здесь тихие...</div>
<div class="hd" style="left:592px;top:150px;width:181px;height:16px"></div>
<div class="t c" style="left:592px;top:151px;width:181px">Описание</div>
<div class="hd" style="left:592px;top:218px;width:181px;height:16px"></div>
<div class="t c" style="left:592px;top:219px;width:181px">Режиссер</div>
<div class="hd" style="left:592px;top:252px;width:181px;height:16px"></div>
<div class="t c" style="left:592px;top:253px;width:181px">Актеры</div>
<div class="hd" style="left:592px;top:286px;width:181px;height:16px"></div>
<div class="t c" style="left:592px;top:287px;width:181px">Дата выпуска</div>
<div class="t c" style="left:592px;top:304px;width:181px">18.07.2018 17:29:00</div>
<div style="left:7px;top:329px;width:859px;height:2px;background:#465f6f"></div>
<div class="ib" style="left:10px;top:341px;width:181px;height:119px;background:#fff"><svg class="i" style="left:43px;top:7px" width="100" height="96"><use href="#ph"/></svg></div>
<div class="ti" style="left:10px;top:460px;width:181px;height:19px"></div>
<svg class="i" style="left:13px;top:466px" width="11" height="11"><use href="#minus"/></svg>
<div class="t c" style="left:26px;top:464px;width:165px">А как же Боб?</div>
<div class="hd" style="left:10px;top:480px;width:181px;height:16px"></div>
<div class="t c" style="left:10px;top:481px;width:181px">Описание</div>
<div class="hd" style="left:10px;top:548px;width:181px;height:16px"></div>
<div class="t c" style="left:10px;top:549px;width:181px">Режиссер</div>
<div class="hd" style="left:10px;top:582px;width:181px;height:16px"></div>
<div class="t c" style="left:10px;top:583px;width:181px">Актеры</div>
<div class="hd" style="left:10px;top:616px;width:181px;height:16px"></div>
<div class="t c" style="left:10px;top:617px;width:181px">Дата выпуска</div>
<div class="t c" style="left:10px;top:634px;width:181px">27.07.2018 13:32:00</div>
<div class="ib" style="left:204px;top:341px;width:181px;height:119px;background:#fff"><svg class="i" style="left:43px;top:7px" width="100" height="96"><use href="#ph"/></svg></div>
<div class="ti" style="left:204px;top:460px;width:181px;height:19px"></div>
<svg class="i" style="left:207px;top:466px" width="11" height="11"><use href="#minus"/></svg>
<div class="t c" style="left:220px;top:464px;width:165px">А потом тишина</div>
<div class="hd" style="left:204px;top:480px;width:181px;height:16px"></div>
<div class="t c" style="left:204px;top:481px;width:181px">Описание</div>
<div class="hd" style="left:204px;top:548px;width:181px;height:16px"></div>
<div class="t c" style="left:204px;top:549px;width:181px">Режиссер</div>
<div class="hd" style="left:204px;top:582px;width:181px;height:16px"></div>
<div class="t c" style="left:204px;top:583px;width:181px">Актеры</div>
<div class="hd" style="left:204px;top:616px;width:181px;height:16px"></div>
<div class="t c" style="left:204px;top:617px;width:181px">Дата выпуска</div>
<div class="t c" style="left:204px;top:634px;width:181px">24.07.2018 10:57:00</div>
<div class="ib" style="left:398px;top:341px;width:181px;height:119px;background:#fff"><svg class="i" style="left:43px;top:7px" width="100" height="96"><use href="#ph"/></svg></div>
<div class="ti" style="left:398px;top:460px;width:181px;height:19px"></div>
<svg class="i" style="left:401px;top:466px" width="11" height="11"><use href="#minus"/></svg>
<div class="t c" style="left:414px;top:464px;width:165px">А потом... Съел?</div>
<div class="hd" style="left:398px;top:480px;width:181px;height:16px"></div>
<div class="t c" style="left:398px;top:481px;width:181px">Описание</div>
<div class="hd" style="left:398px;top:548px;width:181px;height:16px"></div>
<div class="t c" style="left:398px;top:549px;width:181px">Режиссер</div>
<div class="hd" style="left:398px;top:582px;width:181px;height:16px"></div>
<div class="t c" style="left:398px;top:583px;width:181px">Актеры</div>
<div class="hd" style="left:398px;top:616px;width:181px;height:16px"></div>
<div class="t c" style="left:398px;top:617px;width:181px">Дата выпуска</div>
<div class="t c" style="left:398px;top:634px;width:181px">20.07.2018 20:04:00</div>
<div class="ib" style="left:592px;top:341px;width:181px;height:119px;background:#fff"><svg class="i" style="left:43px;top:7px" width="100" height="96"><use href="#ph"/></svg></div>
<div class="ti" style="left:592px;top:460px;width:181px;height:19px"></div>
<svg class="i" style="left:595px;top:466px" width="11" height="11"><use href="#minus"/></svg>
<div class="t c" style="left:608px;top:464px;width:165px">А поутру они проснулись</div>
<div class="hd" style="left:592px;top:480px;width:181px;height:16px"></div>
<div class="t c" style="left:592px;top:481px;width:181px">Описание</div>
<div class="hd" style="left:592px;top:548px;width:181px;height:16px"></div>
<div class="t c" style="left:592px;top:549px;width:181px">Режиссер</div>
<div class="hd" style="left:592px;top:582px;width:181px;height:16px"></div>
<div class="t c" style="left:592px;top:583px;width:181px">Актеры</div>
<div class="hd" style="left:592px;top:616px;width:181px;height:16px"></div>
<div class="t c" style="left:592px;top:617px;width:181px">Дата выпуска</div>
<div class="t c" style="left:592px;top:634px;width:181px">30.07.2018 18:50:00</div>
<div style="left:7px;top:659px;width:859px;height:2px;background:#465f6f"></div>
<div class="ib" style="left:10px;top:671px;width:181px;height:119px;background:#fff"><svg class="i" style="left:43px;top:7px" width="100" height="96"><use href="#ph"/></svg></div>
<div class="ib" style="left:204px;top:671px;width:181px;height:119px;background:#fff"><svg class="i" style="left:43px;top:7px" width="100" height="96"><use href="#ph"/></svg></div>
<div class="ib" style="left:398px;top:671px;width:181px;height:119px;background:#fff"><svg class="i" style="left:43px;top:7px" width="100" height="96"><use href="#ph"/></svg></div>
<div class="ib" style="left:592px;top:671px;width:181px;height:119px;background:#fff"><svg class="i" style="left:43px;top:7px" width="100" height="96"><use href="#ph"/></svg></div></div>
<div style="left:1464px;top:141px;width:16px;height:693px;background:#f0f0f0;border-left:1px solid #e6e6e6"></div>
<svg class="i" style="left:1464px;top:141px" width="16" height="693"><path d="M4 12 L8 8 L12 12 Z" fill="#404040"/><path d="M4 683 L12 683 L8 687 Z" fill="#404040"/><rect x="1.500" y="19.500" width="13" height="5" rx="1.500" fill="#ececec" stroke="#9a9a9a"/></svg>
<div style="left:590px;top:834px;width:890px;height:19px;background:#f0f0f0"></div>
<div style="left:590px;top:834px;width:51px;height:19px;background:#7f98a6"></div>
<div style="left:641px;top:834px;width:52px;height:19px;background:#fff"></div>
<div style="left:693px;top:834px;width:51px;height:19px;background:#7f98a6"></div>
<div style="left:709px;top:834px;width:1px;height:19px;background:#5f7988"></div>
<div style="left:710px;top:834px;width:1px;height:19px;background:#9ab1bd"></div>
<div style="left:726px;top:834px;width:1px;height:19px;background:#5f7988"></div>
<div style="left:727px;top:834px;width:1px;height:19px;background:#9ab1bd"></div>
<div class="t c" style="left:641px;top:837px;width:52px;">1 of 749</div>
<svg class="i" style="left:590px;top:834px" width="160" height="19"><g fill="#3f5a6a"><rect x="4" y="5" width="1.500" height="9"/><path d="M10.500 5 v9 l-5 -4.500z M15.500 5 v9 l-5 -4.500z"/><path d="M26.500 5 v9 l-5 -4.500z M32.500 5 v9 l-5 -4.500z"/><path d="M46 5 v9 l-5 -4.500z"/></g><g fill="#000"><path d="M109 5 v9 l5 -4.500z"/><path d="M122 5 v9 l5 -4.500z M127.500 5 v9 l5 -4.500z"/><path d="M139 5 v9 l5 -4.500z M144.500 5 v9 l5 -4.500z"/><rect x="149.500" y="5" width="1.500" height="9"/></g></svg>
<div style="left:590px;top:853px;width:890px;height:26px;background:linear-gradient(#a7becb,#9cb4c1 30%,#859eac 70%,#6f8998 100%)"></div>
<svg class="i" style="left:595px;top:857px" width="16" height="16" ><use href="#docedit"/></svg>
<svg class="i" style="left:623px;top:857px" width="16" height="16" ><use href="#recycle"/></svg>
<svg class="i" style="left:649px;top:857px" width="16" height="16" ><use href="#burst"/></svg>
<svg class="i" style="left:679px;top:857px" width="16" height="16" ><use href="#arrowbars"/></svg>
<svg class="i" style="left:709px;top:857px" width="16" height="16" ><use href="#updownpic"/></svg>
<svg class="i" style="left:734px;top:857px" width="16" height="16" ><use href="#floppy"/></svg>
<div style="left:1480px;top:98px;width:3px;height:781px;background:#6d8795"></div>
<div style="left:1483px;top:98px;width:115px;height:781px;background:linear-gradient(90deg,#93acb9 0,#adc5d1 1.500%,#adc5d1 8%,#a5bdc9 40%,#9ab2bf 60%,#8099a7 85%,#6f8998 100%)"></div>
<div style="left:1598px;top:98px;width:2px;height:781px;background:#7d97a5"></div>
<div style="left:1487px;top:101px;width:108px;height:2px;background:repeating-linear-gradient(90deg,#2c3c4a 0,#2c3c4a 2px,transparent 2px,transparent 4px)"></div>
<svg class="i" style="left:1517px;top:110px" width="48" height="46" ><use href="#ic_script"/></svg>
<div class="t c l" style="left:1483px;top:159px;width:115px;">Запуск HMSEditor</div>
<div style="left:1487px;top:178px;width:108px;height:1px;background:#6d8795"></div>
<div style="left:1487px;top:179px;width:108px;height:1px;background:#b9cdd6"></div>
<svg class="i" style="left:1517px;top:185px" width="48" height="46" ><use href="#ic_script"/></svg>
<div class="t c l" style="left:1483px;top:234px;width:115px;">Запуск в VLC</div>
<div style="left:1487px;top:253px;width:108px;height:1px;background:#6d8795"></div>
<div style="left:1487px;top:254px;width:108px;height:1px;background:#b9cdd6"></div>
<svg class="i" style="left:1517px;top:260px" width="48" height="46" ><use href="#ic_script"/></svg>
<div class="t c l" style="left:1483px;top:309px;width:115px;">Создать ПОИСК</div>
<div style="left:0px;top:878px;width:1600px;height:2px;background:linear-gradient(#5a7483,#4a6473)"></div>
<div style="left:0px;top:880px;width:1600px;height:18px;background:linear-gradient(#aec5d1,#a6bdca 50%,#94acb9)"></div>
<div style="left:0px;top:898px;width:1600px;height:1px;background:#3c5262"></div>
<div style="left:0px;top:899px;width:1600px;height:1px;background:#a9b6d4"></div>
<div style="left:805px;top:899px;width:56px;height:1px;background:#fff"></div>
<div style="left:866px;top:899px;width:58px;height:1px;background:#fff"></div>
<div style="left:0px;top:899px;width:28px;height:1px;background:#f4f6fa"></div>
<div style="left:2px;top:881px;width:834px;height:17px;border:1px solid #6f8998;border-right-color:#c4d6de;border-bottom-color:#c4d6de;background:linear-gradient(#9fb7c4,#a9c0cc 40%,#a3bbc7)"></div>
<div style="left:838px;top:881px;width:22px;height:17px;border:1px solid #6f8998;border-right-color:#c4d6de;border-bottom-color:#c4d6de;background:linear-gradient(#9fb7c4,#a9c0cc 40%,#a3bbc7)"></div>
<div style="left:862px;top:881px;width:22px;height:17px;border:1px solid #6f8998;border-right-color:#c4d6de;border-bottom-color:#c4d6de;background:linear-gradient(#9fb7c4,#a9c0cc 40%,#a3bbc7)"></div>
<div style="left:886px;top:881px;width:38px;height:17px;border:1px solid #6f8998;border-right-color:#c4d6de;border-bottom-color:#c4d6de;background:linear-gradient(#9fb7c4,#a9c0cc 40%,#a3bbc7)"></div>
<div style="left:925px;top:881px;width:38px;height:17px;border:1px solid #6f8998;border-right-color:#c4d6de;border-bottom-color:#c4d6de;background:linear-gradient(#9fb7c4,#a9c0cc 40%,#a3bbc7)"></div>
<div style="left:964px;top:881px;width:38px;height:17px;border:1px solid #6f8998;border-right-color:#c4d6de;border-bottom-color:#c4d6de;background:linear-gradient(#9fb7c4,#a9c0cc 40%,#a3bbc7)"></div>
<div style="left:1005px;top:881px;width:101px;height:17px;border:1px solid #6f8998;border-right-color:#c4d6de;border-bottom-color:#c4d6de;background:linear-gradient(#9fb7c4,#a9c0cc 40%,#a3bbc7)"></div>
<div style="left:1109px;top:881px;width:101px;height:17px;border:1px solid #6f8998;border-right-color:#c4d6de;border-bottom-color:#c4d6de;background:linear-gradient(#9fb7c4,#a9c0cc 40%,#a3bbc7)"></div>
<div style="left:1213px;top:881px;width:101px;height:17px;border:1px solid #6f8998;border-right-color:#c4d6de;border-bottom-color:#c4d6de;background:linear-gradient(#9fb7c4,#a9c0cc 40%,#a3bbc7)"></div>
<div style="left:1317px;top:881px;width:41px;height:17px;border:1px solid #6f8998;border-right-color:#c4d6de;border-bottom-color:#c4d6de;background:linear-gradient(#9fb7c4,#a9c0cc 40%,#a3bbc7)"></div>
<div style="left:1361px;top:881px;width:31px;height:17px;border:1px solid #6f8998;border-right-color:#c4d6de;border-bottom-color:#c4d6de;background:linear-gradient(#9fb7c4,#a9c0cc 40%,#a3bbc7)"></div>
<div style="left:1395px;top:881px;width:31px;height:17px;border:1px solid #6f8998;border-right-color:#c4d6de;border-bottom-color:#c4d6de;background:linear-gradient(#9fb7c4,#a9c0cc 40%,#a3bbc7)"></div>
<div style="left:1429px;top:881px;width:169px;height:17px;border:1px solid #6f8998;border-right-color:#c4d6de;border-bottom-color:#c4d6de;background:linear-gradient(#9fb7c4,#a9c0cc 40%,#a3bbc7)"></div>
<svg class="i" style="left:841px;top:882px" width="16" height="16" ><use href="#puzzle"/></svg>
<div style="left:865px;top:883px;width:15px;height:15px;border-radius:50%;background:radial-gradient(circle,#fff 0,rgba(255,255,255,.6) 18%,rgba(255,255,255,0) 55%),conic-gradient(from 90deg,#ff2020,#ff20ff,#2030ff,#20e0ff,#20e020,#f0f020,#ff2020);border:1px solid #202028"></div>
<div style="left:890px;top:884px;width:14px;height:11px;background:#9bb1bd;border:1px solid #7d97a5"></div>
<div style="left:907px;top:884px;width:14px;height:11px;background:#000"></div>
<div style="left:929px;top:884px;width:14px;height:11px;background:#fff;border:1px solid #7d97a5"></div>
<div style="left:946px;top:884px;width:14px;height:11px;background:#000"></div>
<div style="left:968px;top:884px;width:14px;height:11px;background:#c3d9e8;border:1px solid #7d97a5"></div>
<div style="left:985px;top:884px;width:14px;height:11px;background:#000"></div>
<div class="t c" style="left:1005px;top:883px;width:101px;">49071</div>
<div class="t c" style="left:1109px;top:883px;width:101px;">0</div>
<div class="t c" style="left:1213px;top:883px;width:101px;">0</div>
<svg class="i" style="left:1321px;top:882px" width="16" height="16" ><use href="#cdrom"/></svg>
<div style="left:1341px;top:884px;width:12px;height:12px;background:#fff;border:1px solid #7d97a5"></div>
<div class="t c" style="left:1429px;top:883px;width:169px;">В. 2.33 от 12.09.2017</div>
</body></html>
